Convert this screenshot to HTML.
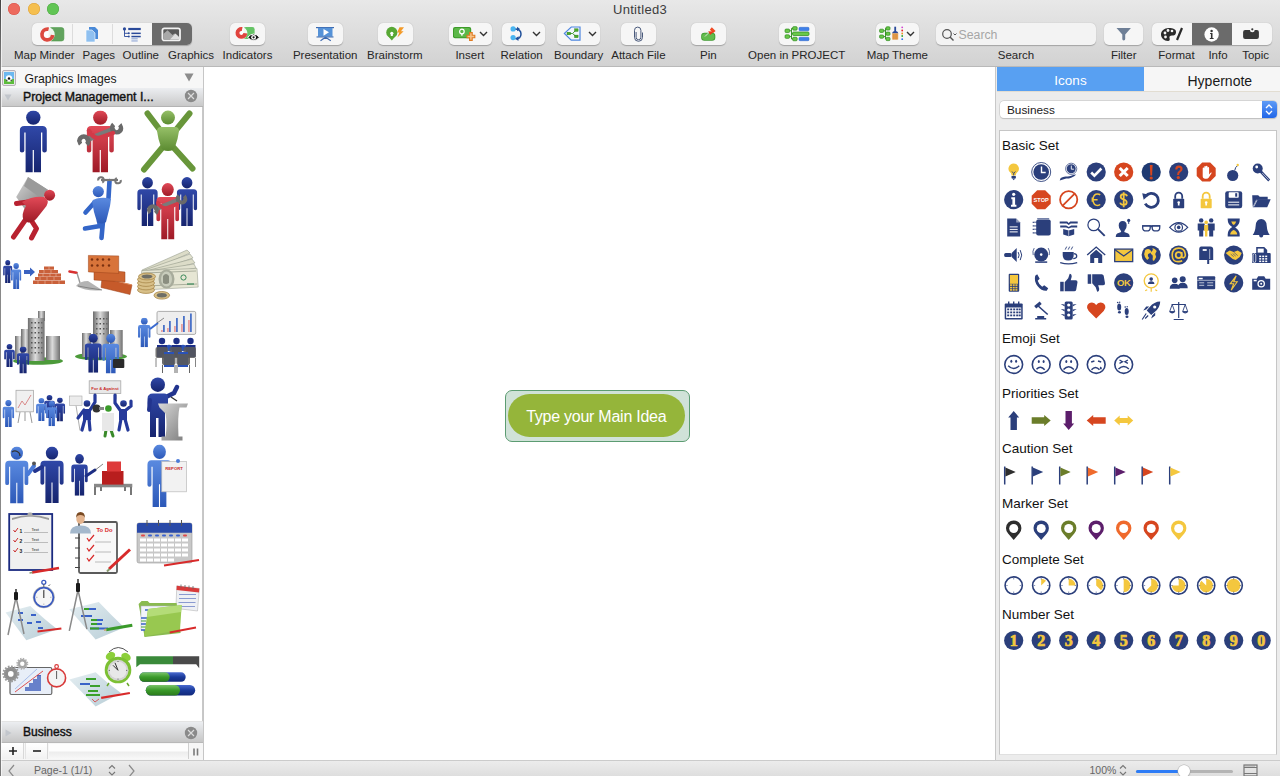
<!DOCTYPE html>
<html><head><meta charset="utf-8">
<style>
*{margin:0;padding:0;box-sizing:border-box}
html,body{width:1280px;height:776px;overflow:hidden;background:#fff;font-family:"Liberation Sans",sans-serif;position:relative}
.a{position:absolute}
#tb{left:0;top:0;width:1280px;height:67px;background:linear-gradient(#e8e8e8,#d2d2d2);border-bottom:1px solid #b9b9b9}
.tl{width:12px;height:12px;border-radius:50%;top:3px}
.title{left:0;width:1280px;top:2px;text-align:center;font-size:13px;letter-spacing:0.3px;color:#3c3c3c}
.btn{top:23px;height:22px;background:#f6f6f6;border-radius:5px;box-shadow:0 0.5px 1px rgba(0,0,0,.25)}
.lbl{top:49px;font-size:11.5px;color:#262626;text-align:center;white-space:nowrap}
.seg{top:23px;height:22px;}
#left{left:0;top:67px;width:203px;height:693px;background:#fff;border-right:1px solid #c8c8c8}
#canvas{left:204px;top:67px;width:791px;height:693px;background:#fff}
#right{left:995px;top:67px;width:285px;height:693px;background:#ececec;border-left:1px solid #c8c8c8}
#status{left:0;top:760px;width:1280px;height:16px;background:linear-gradient(#ececec,#dedede);border-top:1px solid #cbcbcb}
.hd{font-size:13.5px;color:#111;line-height:15px}
</style></head><body>
<div id="tb" class="a">
  <div class="a tl" style="left:8px;background:#ed6a5e;box-shadow:inset 0 0 0 0.5px #d9534a"></div>
  <div class="a tl" style="left:28px;background:#f5bf4f;box-shadow:inset 0 0 0 0.5px #dca03a"></div>
  <div class="a tl" style="left:47px;background:#61c554;box-shadow:inset 0 0 0 0.5px #4ea843"></div>
  <div class="a title">Untitled3</div>
  <!-- segmented 1 -->
  <div class="a btn" style="left:32px;width:160px"></div>
  <div class="a" style="left:72px;top:24px;width:1px;height:20px;background:#dcdcdc"></div>
  <div class="a" style="left:112px;top:24px;width:1px;height:20px;background:#dcdcdc"></div>
  <div class="a" style="left:152px;top:23px;width:40px;height:22px;background:#6b6b6b;border-radius:0 5px 5px 0"></div>
  <svg class="a" style="left:38px;top:25px" width="28" height="18" viewBox="0 0 28 18">
    <rect x="10.9" y="2.6" width="15" height="13.4" rx="2.5" fill="#62a35e" stroke="#4d9a48" stroke-width="0.6"/>
    <circle cx="9.3" cy="9.5" r="7.4" fill="#fff" fill-opacity="0.9"/>
    <circle cx="9.3" cy="9.5" r="5.35" fill="none" stroke="#dc4a40" stroke-width="3.7" stroke-dasharray="25.5 8" transform="rotate(5 9.3 9.5)"/>
  </svg>
  <svg class="a" style="left:84px;top:26px" width="16" height="17" viewBox="0 0 16 17">
    <path d="M5 1h6l3 3v9H5z" fill="#4a8ad8"/>
    <path d="M2 4h6l3 3v9H2z" fill="#8fc0f0" stroke="#fff" stroke-width="0.6"/>
  </svg>
  <svg class="a" style="left:122px;top:27px" width="22" height="16" viewBox="0 0 22 16">
    <circle cx="2.5" cy="1.9" r="1.6" fill="#2a4a9a"/>
    <path d="M2.5 1.9V9.5H6.8M2.5 6.3H6.8" stroke="#2a4a9a" stroke-width="0.9" fill="none"/>
    <rect x="6.25" y="0.9" width="12.5" height="2.2" fill="#2a4a9a"/>
    <rect x="9.4" y="5.6" width="9.35" height="1.5" fill="#2a4a9a"/>
    <rect x="9.4" y="8.8" width="9.35" height="1.5" fill="#2a4a9a"/>
    <circle cx="6.8" cy="6.3" r="1" fill="#2a4a9a"/><circle cx="6.8" cy="9.5" r="1" fill="#2a4a9a"/>
    <rect x="9.4" y="11.25" width="6.3" height="1.1" fill="#8fa6d6"/>
    <rect x="9.4" y="13.4" width="6.3" height="1.1" fill="#8fa6d6"/>
  </svg>
  <svg class="a" style="left:160px;top:27px" width="24" height="16" viewBox="0 0 24 16">
    <rect x="2.4" y="1.3" width="17.6" height="12.1" rx="2" fill="#5a5a5a" stroke="#f2f2f2" stroke-width="1.8"/>
    <path d="M3.3 12.5V7L7.5 3.2l5 4.8 2-1.6 4.6 4.6v1.5z" fill="#a8a8a8"/>
    <path d="M10 12.5L15.5 6.5l3.6 3.5v2.5z" fill="#e0e0e0"/>
  </svg>
  <!-- Indicators -->
  <div class="a btn" style="left:230px;width:35px"></div>
  <svg class="a" style="left:235px;top:26px" width="28" height="18" viewBox="0 0 28 18">
    <rect x="8.6" y="1" width="11" height="11.9" rx="2.2" fill="#66c466"/>
    <circle cx="6.4" cy="6.9" r="6" fill="#fff" fill-opacity="0.9"/>
    <circle cx="6.4" cy="6.9" r="3.95" fill="none" stroke="#e0443e" stroke-width="3.9" stroke-dasharray="18.6 6.2" transform="rotate(5 6.4 6.9)"/>
    <path d="M12.6 11.3q6-6.5 12 0q-6 6.5-12 0z" fill="#1a1a1a" stroke="#fff" stroke-width="1"/>
    <circle cx="18.6" cy="11.3" r="2.4" fill="#fff"/><circle cx="18.6" cy="11.3" r="1.1" fill="#1a1a1a"/>
  </svg>
  <!-- Presentation -->
  <div class="a btn" style="left:308px;width:35px"></div>
  <svg class="a" style="left:315px;top:26px" width="22" height="17" viewBox="0 0 22 17">
    <rect x="1" y="1" width="18" height="1.2" fill="#3d6ab0"/>
    <rect x="3" y="1.8" width="14.5" height="8.8" fill="#5592d8"/>
    <path d="M8.5 2.9v6.9l5.5-3.45z" fill="#fff"/>
    <rect x="1.5" y="10.4" width="17" height="1.1" fill="#3d6ab0"/>
    <path d="M10.5 11.2L5.5 14.8M10.5 11.2L15.8 14.8M7.5 12.5h6" stroke="#3d6ab0" stroke-width="1.1" fill="none"/>
  </svg>
  <!-- Brainstorm -->
  <div class="a btn" style="left:378px;width:35px"></div>
  <svg class="a" style="left:384px;top:26px" width="24" height="18" viewBox="0 0 24 18">
    <circle cx="7.8" cy="6.4" r="5.6" fill="#58a835"/>
    <path d="M4.8 11h6l-3 3.5z" fill="#58a835"/>
    <circle cx="7.8" cy="7.3" r="1.6" fill="#fff"/><path d="M7 8h1.6l.3 2H6.7z" fill="#fff"/>
    <path d="M15.5 1.2H20L17 5.3H19.6L13.4 11.5L15.3 6.6H13.1z" fill="#f39a28"/>
  </svg>
  <!-- Insert -->
  <div class="a btn" style="left:448.5px;width:43.5px"></div>
  <svg class="a" style="left:452px;top:26px" width="24" height="18" viewBox="0 0 24 18">
    <rect x="1" y="1" width="18.2" height="11.3" rx="2" fill="#3d9a2a"/>
    <rect x="2" y="2" width="16.2" height="9.3" rx="1.5" fill="#5cb848"/>
    <circle cx="9.9" cy="5.5" r="2.3" fill="none" stroke="#fff" stroke-width="1.2"/>
    <rect x="9.2" y="7.5" width="1.4" height="2.2" fill="#fff"/>
    <path d="M17.6 6.6h2.6v2.6h2.6v2.6h-2.6v2.6h-2.6v-2.6H15v-2.6h2.6z" fill="#f7c48a" stroke="#e07a20" stroke-width="1.1"/>
  </svg>
  <svg class="a" style="left:479px;top:31px" width="9" height="6" viewBox="0 0 9 6"><path d="M1 1l3.5 3.5L8 1" stroke="#333" stroke-width="1.4" fill="none"/></svg>
  <!-- Relation -->
  <div class="a btn" style="left:502px;width:42.5px"></div>
  <svg class="a" style="left:509px;top:26px" width="18" height="18" viewBox="0 0 18 18">
    <path d="M5.5 2.9q6.5 0 6.5 5t-5.5 4.8" stroke="#1f4f9a" stroke-width="1.5" fill="none"/>
    <path d="M8 0.8l3 2.3-3 2.1z" fill="#1f4f9a"/><path d="M9.6 10.2l-3.4 2.4 3.2 2.4z" fill="#1f4f9a"/>
    <circle cx="4.1" cy="2.9" r="2.6" fill="#48b4f0"/>
    <circle cx="4.1" cy="11.6" r="2.6" fill="#48b4f0"/>
  </svg>
  <svg class="a" style="left:532px;top:31px" width="9" height="6" viewBox="0 0 9 6"><path d="M1 1l3.5 3.5L8 1" stroke="#333" stroke-width="1.4" fill="none"/></svg>
  <!-- Boundary -->
  <div class="a btn" style="left:556.6px;width:43.7px"></div>
  <svg class="a" style="left:563px;top:26px" width="20" height="18" viewBox="0 0 20 18">
    <path d="M1.4 7.4L8.25 1H17V14.1H8.25z" fill="#f2f6fd" stroke="#4d86e0" stroke-width="1.2"/>
    <path d="M6 7.5h3.5M9.5 7.5l3.5-3.4M9.5 7.5l3.5 2.9" stroke="#3a9a2a" stroke-width="0.9"/>
    <rect x="4" y="6.2" width="3.6" height="2.6" fill="#4aaa2a" stroke="#2a7a1a" stroke-width="0.4"/>
    <rect x="11.5" y="2.8" width="3.6" height="2.6" fill="#4aaa2a" stroke="#2a7a1a" stroke-width="0.4"/>
    <rect x="11.5" y="9.1" width="3.6" height="2.6" fill="#4aaa2a" stroke="#2a7a1a" stroke-width="0.4"/>
  </svg>
  <svg class="a" style="left:588px;top:31px" width="9" height="6" viewBox="0 0 9 6"><path d="M1 1l3.5 3.5L8 1" stroke="#333" stroke-width="1.4" fill="none"/></svg>
  <!-- Attach File -->
  <div class="a btn" style="left:621px;width:35px"></div>
  <svg class="a" style="left:632px;top:26px" width="12" height="18" viewBox="0 0 12 18">
    <path d="M10.5 6.5V11.3A4 4 0 0 1 2.5 11.3V4.3A3.2 3.2 0 0 1 8.9 4.3V11.3A2.4 2.4 0 0 1 4.1 11.3V6" stroke="#4a5a7c" stroke-width="1" fill="none"/>
  </svg>
  <!-- Pin -->
  <div class="a btn" style="left:690.6px;width:35.7px"></div>
  <svg class="a" style="left:699px;top:26px" width="20" height="18" viewBox="0 0 20 18">
    <rect x="2.2" y="6.8" width="14.1" height="7.9" rx="3.2" fill="#3f9a30"/>
    <rect x="3" y="7.6" width="12.5" height="6.3" rx="2.6" fill="#62bc4c"/>
    <path d="M6 10.5l4.5-4.5" stroke="#e8e8e8" stroke-width="0.9"/>
    <path d="M10.8 3.8l2-2.5 3.8 3.6-2.5 2z" fill="#f04a24"/>
    <path d="M9.2 5.2l5.8 0.2-3.8 3.6z" fill="#e83a18"/>
  </svg>
  <!-- Open in PROJECT -->
  <div class="a btn" style="left:779px;width:36px"></div>
  <svg class="a" style="left:784px;top:26px" width="26" height="18" viewBox="0 0 26 18">
    <path d="M5.5 4.8H7.5M5.5 10.6H7.5M7.5 2.4V13M7.5 2.4H9M7.5 13H9M7.5 7.7H9" stroke="#2a8a1a" stroke-width="0.9" fill="none"/>
    <g fill="#6ac84a" stroke="#2a8a1a" stroke-width="0.7">
    <rect x="1.05" y="3.05" width="4.5" height="3.5" rx="1"/><rect x="1.05" y="8.85" width="4.5" height="3.5" rx="1"/>
    <rect x="8.65" y="0.65" width="4.5" height="3.5" rx="1"/><rect x="8.65" y="11.25" width="4.5" height="3.5" rx="1"/>
    <rect x="8.6" y="6" width="16.4" height="3.5" rx="1"/></g>
    <rect x="15" y="1.3" width="10" height="3.5" rx="1" fill="#3f80e8" stroke="#2a64c8" stroke-width="0.5"/>
    <rect x="15" y="11.2" width="10" height="3.5" rx="1" fill="#3f80e8" stroke="#2a64c8" stroke-width="0.5"/>
  </svg>
  <!-- Map Theme -->
  <div class="a btn" style="left:875.6px;width:43.4px"></div>
  <svg class="a" style="left:879px;top:26px" width="26" height="18" viewBox="0 0 26 18">
    <path d="M4.6 4.8H6.5M4.6 10.6H6.5M6.5 2.4V13M6.5 2.4H7M6.5 13H7M6.5 7.7H7" stroke="#2a8a1a" stroke-width="0.9" fill="none"/>
    <g fill="#6ac84a" stroke="#2a8a1a" stroke-width="0.7">
    <rect x="0.6" y="3.2" width="4" height="3.2" rx="0.9"/><rect x="0.6" y="9" width="4" height="3.2" rx="0.9"/>
    <rect x="7" y="0.8" width="4" height="3.2" rx="0.9"/><rect x="7" y="6.1" width="4" height="3.2" rx="0.9"/><rect x="7" y="11.4" width="4" height="3.2" rx="0.9"/></g>
    <rect x="15.3" y="0.7" width="1.8" height="5" fill="#2a4a9a"/>
    <path d="M13.2 7.5q0-2.5 3-2.5t3 2.5z" fill="#2a4a9a"/>
    <rect x="13.2" y="7.3" width="6" height="6.3" fill="#e8a050"/>
    <path d="M14.7 8v5.5M16.2 8v5.5M17.7 8v5.5" stroke="#c07a30" stroke-width="0.4"/>
    <circle cx="23.2" cy="1.3" r="0.9" fill="#d040d0"/><circle cx="23.2" cy="4.5" r="0.9" fill="#e82020"/>
    <circle cx="23.2" cy="7.5" r="0.9" fill="#f09020"/><circle cx="23.2" cy="10" r="0.9" fill="#30a030"/><circle cx="23.2" cy="13.2" r="0.9" fill="#3070f0"/>
  </svg>
  <svg class="a" style="left:906px;top:31px" width="9" height="6" viewBox="0 0 9 6"><path d="M1 1l3.5 3.5L8 1" stroke="#333" stroke-width="1.4" fill="none"/></svg>
  <!-- Search -->
  <div class="a btn" style="left:936px;width:160px;background:#f3f3f3"></div>
  <svg class="a" style="left:941px;top:28px" width="18" height="14" viewBox="0 0 18 14">
    <circle cx="6" cy="6" r="4.3" fill="none" stroke="#555" stroke-width="1.2"/>
    <path d="M9 9l3.5 3.5" stroke="#555" stroke-width="1.4"/>
    <path d="M12.5 5.5l1.5 1.5 1.5-1.5" stroke="#555" stroke-width="1" fill="none"/>
  </svg>
  <div class="a" style="left:958.5px;top:28px;font-size:12.3px;color:#a6a6a6">Search</div>
  <!-- Filter -->
  <div class="a btn" style="left:1104px;width:39px"></div>
  <svg class="a" style="left:1116px;top:27px" width="15" height="15" viewBox="0 0 15 15">
    <path d="M0.5 1H14.9L9.2 7.5V12Q9.2 13.4 7.7 13.4Q6.3 13.4 6.3 12V7.5Z" fill="#6e7f96"/>
  </svg>
  <!-- Format/Info/Topic -->
  <div class="a btn" style="left:1152px;width:120px"></div>
  <div class="a" style="left:1192px;top:23px;width:40px;height:22px;background:#6b6b6b"></div>
  <svg class="a" style="left:1160px;top:26px" width="26" height="17" viewBox="0 0 26 17">
    <path d="M9 2C4 2 1 5 1 8.5S4 15 8 15c2 0 2-1.5 1.5-3s0.5-2.5 2.5-2.5 4-.5 4-3.5S13 2 9 2z" fill="#2a2a2a"/>
    <circle cx="5" cy="7" r="1.4" fill="#f6f6f6"/><circle cx="8" cy="4.5" r="1.4" fill="#f6f6f6"/>
    <circle cx="12" cy="5" r="1.3" fill="#f6f6f6"/><circle cx="5.5" cy="11" r="1.4" fill="#f6f6f6"/>
    <path d="M17 14l5-12" stroke="#2a2a2a" stroke-width="2.2"/>
  </svg>
  <svg class="a" style="left:1203px;top:25px" width="18" height="18" viewBox="0 0 18 18">
    <circle cx="8.6" cy="9.5" r="7.2" fill="#fff"/>
    <circle cx="8.6" cy="6" r="1.2" fill="#333"/>
    <path d="M7.1 8h2.4v5h1.1v1H6.8v-1h1.1V9h-0.8z" fill="#333"/>
  </svg>
  <svg class="a" style="left:1242px;top:26px" width="20" height="17" viewBox="0 0 20 17">
    <rect x="1.1" y="3.9" width="15.8" height="9.1" rx="2" fill="#383838"/>
    <circle cx="10.3" cy="3.9" r="2.4" fill="#f6f6f6"/>
    <circle cx="10.3" cy="3.3" r="1.1" fill="#383838"/>
  </svg>
  <div class="a lbl" style="left:-15.7px;width:120px">Map Minder</div>
  <div class="a lbl" style="left:38.8px;width:120px">Pages</div>
  <div class="a lbl" style="left:80.8px;width:120px">Outline</div>
  <div class="a lbl" style="left:131.0px;width:120px">Graphics</div>
  <div class="a lbl" style="left:187.5px;width:120px">Indicators</div>
  <div class="a lbl" style="left:265.2px;width:120px">Presentation</div>
  <div class="a lbl" style="left:334.8px;width:120px">Brainstorm</div>
  <div class="a lbl" style="left:409.8px;width:120px">Insert</div>
  <div class="a lbl" style="left:461.6px;width:120px">Relation</div>
  <div class="a lbl" style="left:518.6px;width:120px">Boundary</div>
  <div class="a lbl" style="left:578.4px;width:120px">Attach File</div>
  <div class="a lbl" style="left:648.3px;width:120px">Pin</div>
  <div class="a lbl" style="left:736.7px;width:120px">Open in PROJECT</div>
  <div class="a lbl" style="left:837.3px;width:120px">Map Theme</div>
  <div class="a lbl" style="left:956.0px;width:120px">Search</div>
  <div class="a lbl" style="left:1063.7px;width:120px">Filter</div>
  <div class="a lbl" style="left:1116.5px;width:120px">Format</div>
  <div class="a lbl" style="left:1158.0px;width:120px">Info</div>
  <div class="a lbl" style="left:1195.6px;width:120px">Topic</div>
</div>
<div id="left" class="a">
  <div class="a" style="left:0;top:0;width:203px;height:21px;background:#f7f7f7"></div>
  <svg class="a" style="left:2px;top:3px" width="14" height="16" viewBox="0 0 14 16">
    <rect x="0.5" y="0.5" width="13" height="15" rx="1.5" fill="#e8e8e8" stroke="#b8b0b8"/>
    <rect x="2" y="2" width="10" height="12" fill="#6cb8f0"/>
    <rect x="2" y="9" width="10" height="5" fill="#5cbc3c"/>
    <circle cx="7" cy="8.5" r="3.2" fill="#fff"/>
    <circle cx="7" cy="8.5" r="1.2" fill="#111"/>
    <circle cx="4.8" cy="10.2" r="0.8" fill="#333"/><circle cx="9.2" cy="10.2" r="0.8" fill="#333"/>
  </svg>
  <div class="a" style="left:24.5px;top:5px;font-size:12.2px;color:#1a1a1a">Graphics Images</div>
  <svg class="a" style="left:184px;top:6px" width="10" height="9" viewBox="0 0 10 9"><path d="M0.5 0.5h9L5 8.5z" fill="#8c8c8c"/></svg>
  <div class="a" style="left:0;top:21px;width:203px;height:19px;background:linear-gradient(#eceef1,#c9c9c9);border-bottom:1px solid #b3b3b3"></div>
  <svg class="a" style="left:4px;top:27px" width="8" height="7" viewBox="0 0 8 7"><path d="M0.5 0.5h7L4 6.5z" fill="#c2c6cc"/></svg>
  <div class="a" style="left:23px;top:23px;font-size:12.3px;-webkit-text-stroke:0.4px #111;color:#111">Project Management I...</div>
  <svg class="a" style="left:184px;top:22px" width="14" height="14" viewBox="0 0 14 14"><circle cx="7" cy="7" r="6.2" fill="#8a8a8a"/><path d="M4 4l6 6M10 4l-6 6" stroke="#dcdcdc" stroke-width="1.2"/></svg>
  <!-- Business header -->
  <div class="a" style="left:0;top:654px;width:203px;height:22px;background:linear-gradient(#eceef1,#c6c6c6);border-top:1px solid #e4e4e4;border-bottom:1px solid #b8b8b8"></div>
  <svg class="a" style="left:5px;top:662px" width="7" height="8" viewBox="0 0 7 8"><path d="M0.5 0.5v7L6.5 4z" fill="#c2c6cc"/></svg>
  <div class="a" style="left:23px;top:658px;font-size:12px;-webkit-text-stroke:0.4px #111;color:#111">Business</div>
  <svg class="a" style="left:184px;top:659px" width="14" height="14" viewBox="0 0 14 14"><circle cx="7" cy="7" r="6.2" fill="#8a8a8a"/><path d="M4 4l6 6M10 4l-6 6" stroke="#dcdcdc" stroke-width="1.2"/></svg>
  <!-- +/- bar -->
  <div class="a" style="left:0;top:676px;width:203px;height:17px;background:#f6f6f6"></div>
  <div class="a" style="left:0;top:676px;width:24px;height:16px;background:linear-gradient(#fff,#f2f2f2);border-right:1px solid #d8d8d8"></div>
  <div class="a" style="left:25px;top:676px;width:23px;height:16px;background:linear-gradient(#fff,#f2f2f2);border-right:1px solid #d8d8d8;border-left:1px solid #e4e4e4"></div>
  <div class="a" style="left:49px;top:677px;width:139px;height:15px;background:linear-gradient(#fdfdfd 0%,#fdfdfd 45%,#ededed 55%,#f8f8f8 100%)"></div>
  <div class="a" style="left:188px;top:676px;width:15px;height:16px;background:#f6f6f6;border-left:1px solid #cfcfcf"></div>
  <svg class="a" style="left:8px;top:679px" width="10" height="10" viewBox="0 0 10 10"><path d="M5 1v8M1 5h8" stroke="#222" stroke-width="1.6"/></svg>
  <svg class="a" style="left:32px;top:679px" width="10" height="10" viewBox="0 0 10 10"><path d="M1 5h8" stroke="#222" stroke-width="1.6"/></svg>
  <svg class="a" style="left:192px;top:680px" width="8" height="10" viewBox="0 0 8 10"><path d="M2 1.5v7M5.5 1.5v7" stroke="#7a7a7a" stroke-width="1.6"/></svg>
  <svg class="a" style="left:0;top:40px" width="203" height="615" viewBox="0 107 203 615">
<defs>
  <linearGradient id="gNavy" x1="0" y1="0" x2="0" y2="1"><stop offset="0" stop-color="#3048a8"/><stop offset="1" stop-color="#16246e"/></linearGradient>
  <linearGradient id="gBlue" x1="0" y1="0" x2="0" y2="1"><stop offset="0" stop-color="#5a8ae0"/><stop offset="1" stop-color="#2c58b8"/></linearGradient>
  <linearGradient id="gRed" x1="0" y1="0" x2="0" y2="1"><stop offset="0" stop-color="#e24a58"/><stop offset="1" stop-color="#9e1a26"/></linearGradient>
  <linearGradient id="gGreen" x1="0" y1="0" x2="0" y2="1"><stop offset="0" stop-color="#96c068"/><stop offset="1" stop-color="#5a8a30"/></linearGradient>
  <linearGradient id="gBld" x1="0" y1="0" x2="1" y2="0"><stop offset="0" stop-color="#6c6c6c"/><stop offset="0.45" stop-color="#dcdcdc"/><stop offset="1" stop-color="#707070"/></linearGradient>
  <linearGradient id="gGrey" x1="0" y1="0" x2="1" y2="1"><stop offset="0" stop-color="#d8d8d8"/><stop offset="1" stop-color="#7a7a7a"/></linearGradient>
  <linearGradient id="gPaper" x1="0" y1="0" x2="1" y2="1"><stop offset="0" stop-color="#e4eef2"/><stop offset="1" stop-color="#b8cdd6"/></linearGradient>
  <linearGradient id="gBar" x1="0" y1="0" x2="0" y2="1"><stop offset="0" stop-color="#7cc46a"/><stop offset="0.5" stop-color="#3a9a2a"/><stop offset="1" stop-color="#2a7a1a"/></linearGradient>
  <linearGradient id="gBarB" x1="0" y1="0" x2="0" y2="1"><stop offset="0" stop-color="#4a6ad0"/><stop offset="0.5" stop-color="#1a3a9a"/><stop offset="1" stop-color="#12287a"/></linearGradient>
  <symbol id="man" viewBox="0 0 28 62" preserveAspectRatio="none"><circle cx="14" cy="7.2" r="7.2"/><path d="M0.5 20Q0.5 15.5 5 15.5H23Q27.5 15.5 27.5 20V40Q27.5 42 25.2 42Q23 42 23 40V22H21.7V62H14.6V39.5H13.4V62H6.3V22H5V40Q5 42 2.7 42Q0.5 42 0.5 40Z"/></symbol>
  <symbol id="wr" viewBox="0 0 46 16"><path d="M8 8H38" stroke="#7a7a7a" stroke-width="5"/><circle cx="6" cy="8" r="4.3" fill="none" stroke="#6a6a6a" stroke-width="4.4" stroke-dasharray="20 7" transform="rotate(158 6 8)"/><circle cx="40" cy="8" r="4.3" fill="none" stroke="#6a6a6a" stroke-width="4.4" stroke-dasharray="20 7" transform="rotate(-22 40 8)"/></symbol>
</defs>
<!-- r0c0 blue man -->
<use href="#man" x="19.3" y="110.4" width="28" height="62" fill="url(#gNavy)"/>
<!-- r0c1 red man with wrench -->
<use href="#man" x="86.3" y="110.4" width="28" height="62" fill="url(#gRed)"/>
<g transform="rotate(-22 100 134)"><use href="#wr" x="76" y="126" width="48" height="17"/></g>
<path d="M89 131q5 8 10 7l14-5" stroke="#d23a48" stroke-width="4.5" fill="none" stroke-linecap="round"/>
<!-- r0c2 green X man -->
<circle cx="168" cy="117.6" r="7" fill="url(#gGreen)"/>
<path d="M147.5 113.5L160 130M189.5 113.5L176 130M162 148L144 169.5M174 148L192.5 168.5" stroke="#68963a" stroke-width="6" stroke-linecap="round"/>
<path d="M157 131q0-4 4-4h14q4 0 4 4q-1 8-4 16q-1 4-7 4t-7-4q-3-8-4-16z" fill="url(#gGreen)"/>
<!-- r1c0 red man carrying box -->
<path d="M16.2 197L28 177L47.8 189.8L36 209.6L25 209.6Z" fill="url(#gGrey)"/><path d="M28 177L47.8 189.8L42 199L24 186z" fill="#9a9a9a"/>
<circle cx="49.6" cy="195.2" r="5.5" fill="url(#gRed)"/>
<path d="M40 200.5L16.5 203.5M26 219L13.5 237M31 220l5.5 8.5-5 9.5" stroke="#b82230" stroke-width="5" stroke-linecap="round" stroke-linejoin="round" fill="none"/>
<path d="M22 202Q32 196 44 197Q50 200 46.5 206L37 218Q33 223 28 222.5L23.5 220Q21 214 26 206z" fill="url(#gRed)"/>
<!-- r1c1 blue man reaching -->
<circle cx="98.3" cy="191.6" r="5.6" fill="url(#gBlue)"/>
<path d="M109.5 181l-1 17M94 203l-8.5 9.5M99 221l1 5-15 2.5M103 221l-1.5 17" stroke="#3466c8" stroke-width="4.6" stroke-linecap="round" stroke-linejoin="round" fill="none"/>
<path d="M92 201q5-4 15-3l4 1-1 7-4 16q-4 3-9 0l-3-10z" fill="url(#gBlue)"/>
<path d="M101 180h17" stroke="#777" stroke-width="2.2"/><circle cx="101" cy="180" r="2.8" fill="none" stroke="#777" stroke-width="2" stroke-dasharray="12 5.6" transform="rotate(170 101 180)"/><circle cx="118" cy="180.5" r="2.8" fill="none" stroke="#777" stroke-width="2" stroke-dasharray="12 5.6" transform="rotate(-10 118 180.5)"/>
<!-- r1c2 team -->
<use href="#man" x="137" y="177" width="21" height="49" fill="url(#gNavy)"/>
<use href="#man" x="176.5" y="177" width="21" height="49" fill="url(#gNavy)"/>
<use href="#man" x="156" y="183" width="23.5" height="56.4" fill="url(#gRed)"/>
<g transform="rotate(-22 167 204)"><use href="#wr" x="146" y="197" width="42" height="15"/></g>
<path d="M158 203q4 6 9 5l10-4" stroke="#d23a48" stroke-width="4" fill="none" stroke-linecap="round"/>
<!-- r2c0 men arrow bricks -->
<use href="#man" x="3" y="260" width="9.5" height="23" fill="url(#gNavy)"/>
<use href="#man" x="10.8" y="263" width="10.7" height="26" fill="url(#gBlue)"/>
<path d="M24 270h6v-2.5l5 4.5-5 4.5v-2.5h-6z" fill="#3a62c0"/>
<g fill="#c9603a">
<rect x="44" y="266.5" width="10" height="3.2"/><rect x="39" y="270" width="19" height="3.2"/><rect x="38" y="273.5" width="23" height="3.2"/><rect x="35" y="277" width="26" height="3.2"/><rect x="33" y="280.5" width="32" height="3.5"/>
</g><g stroke="#f0c8b0" stroke-width="0.5"><path d="M49 266.5v3.2M44 270v3.2M51 270v3.2M43 273.5v3.2M50 273.5v3.2M56 273.5v3.2M40 277v3.2M47 277v3.2M54 277v3.2M38 280.5v3.5M45 280.5v3.5M52 280.5v3.5M59 280.5v3.5"/></g>
<!-- r2c1 bricks trowel -->
<path d="M102 278l30 7-2 9.5-29-7z" fill="#c65a2a" stroke="#9a4018" stroke-width="0.5"/><path d="M104 278l28 7" stroke="#e08a5a" stroke-width="1.2"/>
<path d="M94 269l31 3v10l-31-2z" fill="#cc6430" stroke="#9a4018" stroke-width="0.5"/>
<path d="M88.4 255.4l30.3 0.5v17.5l-30.3-1.5z" fill="#d8743a" stroke="#9a4018" stroke-width="0.5"/>
<g fill="#7a3010"><circle cx="92" cy="259.5" r="1.2"/><circle cx="97.5" cy="259.5" r="1.2"/><circle cx="103" cy="259.5" r="1.2"/><circle cx="109" cy="259.5" r="1.2"/><circle cx="92" cy="265.5" r="1.2"/><circle cx="97.5" cy="265.5" r="1.2"/><circle cx="103" cy="265.5" r="1.2"/><circle cx="109" cy="265.5" r="1.2"/></g>
<path d="M69.5 271.5l7 1.2" stroke="#d83030" stroke-width="2.6" stroke-linecap="round"/><path d="M77 273l3 10" stroke="#999" stroke-width="1.4" fill="none"/><path d="M76 286q4-5 12-5l14 9q-14 2-26-4z" fill="#b4b4b4"/><path d="M78 286q10 2 24 4" stroke="#777" stroke-width="0.8" fill="none"/>
<!-- r2c2 money -->
<g stroke="#8a9080" stroke-width="0.5">
<path d="M142 270L187 250L190 253L145 273z" fill="#dcdcc8"/>
<path d="M142 271L190 254L193 258L144 275z" fill="#e2e2d0"/>
<path d="M142 272L192 259L195 263L144 277z" fill="#dcdcc8"/>
<path d="M142 272L194 264L196 268L144 278z" fill="#e2e2d0"/>
<path d="M141.7 270.5L197 268.5L198.2 287.1L143 290z" fill="#e6e6d4"/>
</g>
<path d="M143 273l53-2M144 286l53-2" stroke="#9aa08e" stroke-width="0.8"/>
<ellipse cx="166.5" cy="279" rx="8" ry="9.5" fill="#a8ac9c"/><ellipse cx="166.5" cy="279" rx="5.5" ry="7.5" fill="#c8ccbc"/><path d="M163 276q3-4 6 0v7q-3 2-6 0z" fill="#8a8e80"/>
<circle cx="183.5" cy="277.5" r="2.6" fill="none" stroke="#3a8a5a" stroke-width="1"/>
<path d="M187 284h7" stroke="#3a8a5a" stroke-width="1.2"/>
<g fill="#d8c088" stroke="#a8884a" stroke-width="0.8"><ellipse cx="146" cy="290" rx="8.5" ry="3.4"/><ellipse cx="146" cy="286.5" rx="8.5" ry="3.4"/><ellipse cx="146" cy="283" rx="8.5" ry="3.4"/><ellipse cx="146" cy="279.5" rx="8.5" ry="3.4"/><ellipse cx="147" cy="276.5" rx="8.5" ry="3.4"/><ellipse cx="161.8" cy="295.3" rx="7.8" ry="3.8"/></g>
<g fill="#6e6e66"><ellipse cx="147" cy="276.5" rx="5.5" ry="2"/><ellipse cx="161.8" cy="295.3" rx="5" ry="2.2"/></g>
<!-- r3c0 buildings + men -->
<ellipse cx="38" cy="361" rx="25" ry="3.8" fill="#4c9a3a"/>
<rect x="15" y="336" width="10" height="24" fill="url(#gBld)"/>
<rect x="21" y="329" width="10" height="31" fill="url(#gBld)"/>
<rect x="38" y="311" width="7" height="10" fill="url(#gBld)"/>
<rect x="27.9" y="318" width="16.7" height="43" fill="url(#gBld)"/>
<rect x="46" y="336" width="14" height="24" fill="url(#gBld)"/>
<g fill="#666"><rect x="31" y="352" width="1.5" height="1.5"/><rect x="34.5" y="352" width="1.5" height="1.5"/><rect x="38" y="352" width="1.5" height="1.5"/><rect x="41" y="322" width="1.5" height="1.5"/><rect x="41" y="327" width="1.5" height="1.5"/><rect x="41" y="332" width="1.5" height="1.5"/><rect x="41" y="337" width="1.5" height="1.5"/><rect x="41" y="342" width="1.5" height="1.5"/><rect x="41" y="347" width="1.5" height="1.5"/><rect x="41" y="352" width="1.5" height="1.5"/></g><g fill="#555"><rect x="31" y="322" width="1.5" height="1.5"/><rect x="34.5" y="322" width="1.5" height="1.5"/><rect x="38" y="322" width="1.5" height="1.5"/><rect x="31" y="327" width="1.5" height="1.5"/><rect x="34.5" y="327" width="1.5" height="1.5"/><rect x="38" y="327" width="1.5" height="1.5"/><rect x="31" y="332" width="1.5" height="1.5"/><rect x="34.5" y="332" width="1.5" height="1.5"/><rect x="38" y="332" width="1.5" height="1.5"/><rect x="31" y="337" width="1.5" height="1.5"/><rect x="34.5" y="337" width="1.5" height="1.5"/><rect x="38" y="337" width="1.5" height="1.5"/><rect x="31" y="342" width="1.5" height="1.5"/><rect x="34.5" y="342" width="1.5" height="1.5"/><rect x="38" y="342" width="1.5" height="1.5"/><rect x="31" y="347" width="1.5" height="1.5"/><rect x="34.5" y="347" width="1.5" height="1.5"/><rect x="38" y="347" width="1.5" height="1.5"/></g>
<use href="#man" x="4" y="344" width="11" height="23" fill="url(#gNavy)"/>
<use href="#man" x="16.7" y="346.4" width="12.8" height="27" fill="url(#gNavy)"/>
<!-- r3c1 handshake -->
<ellipse cx="101" cy="356.5" rx="26" ry="3.8" fill="#4c9a3a"/>
<rect x="82" y="333" width="9" height="24" fill="url(#gBld)"/>
<rect x="110" y="330" width="12.7" height="27" fill="url(#gBld)"/>
<rect x="93" y="311.4" width="16" height="46" fill="url(#gBld)"/>
<g fill="#666"><rect x="96" y="333" width="1.5" height="1.5"/><rect x="99.5" y="333" width="1.5" height="1.5"/><rect x="103" y="333" width="1.5" height="1.5"/><rect x="106" y="318" width="1.5" height="1.5"/><rect x="106" y="323" width="1.5" height="1.5"/><rect x="106" y="328" width="1.5" height="1.5"/></g><g fill="#555"><rect x="96" y="318" width="1.5" height="1.5"/><rect x="99.5" y="318" width="1.5" height="1.5"/><rect x="103" y="318" width="1.5" height="1.5"/><rect x="96" y="323" width="1.5" height="1.5"/><rect x="99.5" y="323" width="1.5" height="1.5"/><rect x="103" y="323" width="1.5" height="1.5"/><rect x="96" y="328" width="1.5" height="1.5"/><rect x="99.5" y="328" width="1.5" height="1.5"/><rect x="103" y="328" width="1.5" height="1.5"/></g>
<use href="#man" x="84.5" y="333.7" width="17.5" height="39" fill="url(#gNavy)"/>
<use href="#man" x="102" y="333.7" width="17.5" height="39.8" fill="url(#gBlue)"/>
<rect x="113" y="359" width="11.3" height="9" rx="1" fill="#2a2a2a"/>
<!-- r3c2 presentation audience -->
<rect x="157" y="311.4" width="38.7" height="23" rx="1.5" fill="#eeeeee" stroke="#999" stroke-width="0.8"/>
<g fill="#4a72c8"><rect x="163" y="325" width="1.8" height="7"/><rect x="169" y="321" width="1.8" height="11"/><rect x="176" y="318" width="1.8" height="14"/><rect x="183" y="316" width="1.8" height="16"/><rect x="190" y="313.5" width="1.8" height="18.5"/></g>
<g fill="#e8a0a0"><rect x="161" y="330" width="1.8" height="2"/><rect x="167" y="328" width="1.8" height="4"/><rect x="174" y="326" width="1.8" height="6"/><rect x="181" y="324" width="1.8" height="8"/><rect x="188" y="320" width="1.8" height="12"/></g>
<use href="#man" x="137.8" y="317.7" width="13" height="29.5" fill="url(#gBlue)"/>
<path d="M150 329l8-6" stroke="#3a6ad0" stroke-width="2" /><path d="M157 323l7-5" stroke="#444" stroke-width="0.6"/>
<g fill="#1c2e86"><circle cx="162" cy="341" r="3.2"/><circle cx="176.5" cy="341" r="3.2"/><circle cx="190.5" cy="341" r="3.2"/></g>
<g fill="#2a52b8"><circle cx="169" cy="348" r="3.2"/><circle cx="183" cy="348" r="3.2"/></g>
<g fill="#1c2e86"><path d="M157 345h10v12h-10zM171.5 345h10v12h-10zM185.5 345h10v12h-10z"/></g>
<g fill="#5a5a5a" fill-opacity="0.85"><rect x="155.5" y="347" width="12.5" height="11" rx="2"/><rect x="169.5" y="347" width="12.5" height="11" rx="2"/><rect x="183.5" y="347" width="12.5" height="11" rx="2"/></g>
<g stroke="#666" stroke-width="0.8"><path d="M156 358v9M167.5 358v9M184 358v9M195.5 358v9"/></g>
<g fill="#2a52b8"><path d="M164 352h10v15h-10zM178 352h10v15h-10z"/></g>
<g fill="#5a5a5a" fill-opacity="0.9"><rect x="162" y="354" width="13.5" height="11" rx="2"/><rect x="176.5" y="354" width="13.5" height="11" rx="2"/></g>
<g stroke="#555" stroke-width="0.9"><path d="M162.5 365v8M175 365v8M177 365v8M189.5 365v8"/></g>
<!-- r4c0 flipchart group -->
<rect x="16" y="390.3" width="17.5" height="21.5" fill="#f0f0f0" stroke="#aaa" stroke-width="0.8"/>
<path d="M18 408l4-7 3 4 6-10" stroke="#d06060" stroke-width="0.7" fill="none"/>
<path d="M20 412l-2 11M25 412v9M30 412l2 11" stroke="#999" stroke-width="1"/>
<use href="#man" x="2.4" y="399.9" width="12" height="27" fill="url(#gBlue)"/>
<use href="#man" x="44" y="395" width="11" height="23" fill="url(#gNavy)"/>
<use href="#man" x="54.5" y="397.5" width="10.8" height="24" fill="url(#gNavy)"/>
<use href="#man" x="35.9" y="398" width="11" height="23" fill="url(#gBlue)"/>
<use href="#man" x="46" y="401" width="11.5" height="25.2" fill="url(#gBlue)"/>
<!-- r4c1 protest -->
<rect x="89.2" y="380.8" width="31.6" height="12.7" fill="#e8e8e8" stroke="#aaa" stroke-width="0.8"/>
<text x="105" y="389.5" font-size="4.2" font-weight="bold" fill="#c82828" text-anchor="middle" font-family="Liberation Sans">For &amp; Against</text>
<path d="M95 393.5v6M116 393.5v6M76 405.5l4 25" stroke="#999" stroke-width="0.8"/>
<rect x="69.3" y="396" width="12.7" height="9.5" fill="#ececec" stroke="#aaa" stroke-width="0.6"/>
<circle cx="87" cy="403.5" r="3.3" fill="url(#gNavy)"/><circle cx="123.5" cy="403.5" r="3.3" fill="url(#gNavy)"/>
<path d="M83 409h8v11h-8zM119 409h8v11h-8z" fill="#263a9a"/><path d="M85 419l-3 11M89 419l1 11M84 410l-6 8M90 410l5-8v-7M121 419l-2 11M125 419l3 11M120 410l-5-7v-8M126 410l5-4v-5" stroke="#263a9a" stroke-width="3.2" stroke-linecap="round" fill="none"/>
<circle cx="108.4" cy="408.5" r="3.3" fill="#3a9a2a"/>
<path d="M106 430l-1 6M111 430l2 6" stroke="#3a8a2a" stroke-width="3" stroke-linecap="round"/>
<rect x="102" y="413" width="12" height="18" fill="#e8e8e8"/>
<circle cx="96.5" cy="408.5" r="4" fill="#333"/><path d="M99 407h5v3h-5z" fill="#888"/>
<!-- r4c2 podium -->
<circle cx="157.8" cy="384.7" r="7.2" fill="url(#gNavy)"/>
<path d="M166 397L174 393L177 387" stroke="#22348e" stroke-width="4.5" stroke-linecap="round" fill="none"/>
<path d="M147.5 399Q147.5 393.5 153 393.5H164Q168 393.5 168 397V412H165V437H158.5V418H156V437H150V412Q147.5 408 147.5 403z" fill="url(#gNavy)"/>
<path d="M150 400l-1 10" stroke="#22348e" stroke-width="4" stroke-linecap="round"/>
<path d="M158 403.5h30l-1.5 4h-7q-2 8-1 29h4v4h-21v-4h4q2-12 0-23l-6-6z" fill="url(#gGrey)"/>
<path d="M171 397l6 4" stroke="#333" stroke-width="1.4"/>
<!-- r5c0 interview -->
<use href="#man" x="4.8" y="446.5" width="24" height="57" fill="url(#gBlue)"/>
<path d="M28 474l6-8" stroke="#4a7ad8" stroke-width="4" stroke-linecap="round"/><circle cx="34" cy="463.5" r="2" fill="#555"/>
<path d="M12 452a5 5 0 0 1 8 4" stroke="#333" stroke-width="1.2" fill="none"/>
<use href="#man" x="40" y="446.5" width="24" height="56.5" fill="url(#gNavy)"/>
<path d="M42 467l-7 4" stroke="#23358e" stroke-width="4" stroke-linecap="round"/>
<!-- r5c1 man box table -->
<use href="#man" x="71" y="454" width="17" height="41.8" fill="url(#gNavy)"/>
<path d="M86 476l9-6" stroke="#1c2e86" stroke-width="3" stroke-linecap="round"/><path d="M94 471l9-7" stroke="#333" stroke-width="0.6"/>
<rect x="94" y="483.8" width="38.3" height="3.5" fill="#888"/>
<path d="M95 487v8M131 487v8M101 487v4M125 487v4" stroke="#777" stroke-width="2"/>
<rect x="102" y="471" width="21.5" height="13.6" fill="#b81e1e"/>
<rect x="107" y="461.5" width="14" height="10" fill="#de3a3a"/>
<!-- r5c2 report -->
<use href="#man" x="147" y="444.5" width="25" height="62.5" fill="url(#gBlue)"/>
<rect x="161.8" y="461.5" width="24.7" height="30.3" fill="#f2f2f2" stroke="#bbb" stroke-width="0.7"/>
<text x="174" y="469.5" font-size="4.2" font-weight="bold" fill="#c82828" text-anchor="middle" font-family="Liberation Sans">REPORT</text>
<circle cx="178" cy="461" r="2" fill="#4a7ad8"/>
<!-- r6c0 clipboard -->
<rect x="9.2" y="514" width="43" height="56" fill="#f0f0f0" stroke="#1a2a80" stroke-width="1.8"/>
<path d="M12 520q18-7 37 0v-2q-18-6-37 0z" fill="#9a9a9a"/><rect x="27.5" y="512.5" width="5" height="4" rx="1.5" fill="#aaa"/>
<g stroke="#c82828" stroke-width="1" fill="none"><path d="M13.5 530l1.5 2 3-4M13.5 540l1.5 2 3-4M13.5 550l1.5 2 3-4"/></g>
<g font-family="Liberation Sans" font-size="5" font-weight="bold" fill="#222"><text x="19.5" y="533">1</text><text x="19.5" y="543">2</text><text x="19.5" y="553">3</text></g>
<g font-family="Liberation Sans" font-size="4" fill="#222"><text x="31.5" y="531">Text</text><text x="31.5" y="541">Text</text><text x="31.5" y="551">Text</text></g>
<g stroke="#999" stroke-width="0.6"><path d="M24 532.5h24M24 542.5h24M24 552.5h24"/></g>
<path d="M32 572.5l27-4.5" stroke="#d82a2a" stroke-width="2.6"/><path d="M29.5 573l3-.5" stroke="#8a9a70" stroke-width="1.5"/>
<!-- r6c1 todo -->
<rect x="79" y="522" width="38" height="51" rx="1.5" fill="#f8f8f8" stroke="#5a5a5a" stroke-width="1.8"/>
<g stroke="#444" stroke-width="1.2"><path d="M75 538h5M75 548h5M75 558h5M75 567.5h5"/></g>
<path d="M70 533.5q0-8 10.5-8t10.5 8z" fill="#a4b8cc"/><ellipse cx="80.5" cy="519" rx="4.2" ry="5" fill="#e4b48e"/><path d="M76 518q0-6 4.5-6t4.5 6q-1-3-4.5-3t-4.5 3z" fill="#7a4a22"/>
<text x="104.5" y="532" font-size="5.8" font-weight="bold" fill="#d82a2a" text-anchor="middle" font-family="Liberation Sans">To Do</text>
<g stroke="#d82a2a" stroke-width="1.2" fill="none"><path d="M87 538l2 3 5-6M87 548l2 3 5-6M87 558l2 3 5-6"/></g>
<g stroke="#aaa" stroke-width="0.8"><path d="M95 542h16M95 552h16M95 562h16"/></g>
<path d="M109 569l21-19.5" stroke="#d82a2a" stroke-width="3"/><path d="M107 571.5l2.5-2.5" stroke="#8a9a70" stroke-width="2"/>
<!-- r6c2 calendar -->
<rect x="137" y="523" width="55" height="40" rx="2" fill="#c8c8c8" stroke="#999" stroke-width="0.6"/>
<path d="M137 532.7V525q0-2 2-2h51q2 0 2 2v7.7z" fill="#2a4aa8"/>
<g stroke="#555" stroke-width="1"><path d="M147 520v6M158.5 520v6M170 520v6M181.5 520v6"/></g>
<g fill="#3a62d0"><rect x="148" y="534.5" width="4" height="2" rx="1"/><rect x="155" y="534.5" width="4" height="2" rx="1"/><rect x="162" y="534.5" width="4" height="2" rx="1"/><rect x="169" y="534.5" width="4" height="2" rx="1"/><rect x="176" y="534.5" width="4" height="2" rx="1"/></g>
<g fill="#e04a4a"><rect x="141" y="534.5" width="4" height="2" rx="1"/><rect x="183" y="534.5" width="4" height="2" rx="1"/></g>
<g fill="#fff"><rect x="140" y="538.5" width="6" height="3"/><rect x="147" y="538.5" width="6" height="3"/><rect x="154" y="538.5" width="6" height="3"/><rect x="161" y="538.5" width="6" height="3"/><rect x="168" y="538.5" width="6" height="3"/><rect x="175" y="538.5" width="6" height="3"/><rect x="182" y="538.5" width="6" height="3"/>
<rect x="140" y="543.5" width="6" height="3"/><rect x="147" y="543.5" width="6" height="3"/><rect x="154" y="543.5" width="6" height="3"/><rect x="161" y="543.5" width="6" height="3"/><rect x="168" y="543.5" width="6" height="3"/><rect x="175" y="543.5" width="6" height="3"/><rect x="182" y="543.5" width="6" height="3"/>
<rect x="140" y="548.5" width="6" height="3"/><rect x="147" y="548.5" width="6" height="3"/><rect x="154" y="548.5" width="6" height="3"/><rect x="161" y="548.5" width="6" height="3"/><rect x="168" y="548.5" width="6" height="3"/><rect x="175" y="548.5" width="6" height="3"/><rect x="182" y="548.5" width="6" height="3"/>
<rect x="140" y="553.5" width="6" height="3"/><rect x="147" y="553.5" width="6" height="3"/><rect x="154" y="553.5" width="6" height="3"/><rect x="161" y="553.5" width="6" height="3"/><rect x="168" y="553.5" width="6" height="3"/><rect x="175" y="553.5" width="6" height="3"/><rect x="182" y="553.5" width="6" height="3"/>
<rect x="140" y="558.5" width="6" height="3"/><rect x="147" y="558.5" width="6" height="3"/><rect x="154" y="558.5" width="6" height="3"/><rect x="161" y="558.5" width="6" height="3"/><rect x="168" y="558.5" width="6" height="3"/></g>
<path d="M164 565.5l35-5.5" stroke="#d82a2a" stroke-width="2.2"/>
<!-- r7c0 compass paper stopwatch -->
<path d="M5.6 612.5L30.3 606Q45 620 57.4 629.2L26.3 640.3Q15 625 5.6 612.5z" fill="url(#gPaper)"/>
<g fill="#3a62c8"><rect x="18" y="612" width="5" height="2"/><rect x="31" y="614" width="5" height="2"/><rect x="18" y="619" width="5" height="2"/><rect x="36" y="621" width="5" height="2"/><rect x="27" y="622" width="5" height="2"/><rect x="38" y="627" width="5" height="2"/></g>
<path d="M16 597L8 635M16 597L24 634" stroke="#8a8a8a" stroke-width="1.5"/><path d="M16 589v4" stroke="#222" stroke-width="1.4"/><rect x="14" y="592" width="4" height="8" rx="1" fill="#1a1a1a"/>
<circle cx="43.8" cy="597.3" r="11" fill="#b8b8b8"/><circle cx="43.8" cy="597.3" r="9.6" fill="#f6f6f6" stroke="#3a5ac0" stroke-width="1.8"/><circle cx="43.8" cy="582.3" r="2" fill="none" stroke="#3a5ac0" stroke-width="1.3"/><path d="M43.8 584.3v2.5M48.5 586l1.5-1.5" stroke="#555" stroke-width="1"/><path d="M43.8 590v8" stroke="#333" stroke-width="1.1"/><g stroke="#999" stroke-width="0.6"><path d="M43.8 589.5v1.5M43.8 603.5v1.5M36 597.3h1.5M50 597.3h1.5"/></g>
<path d="M37.5 631.6l23.9-3.2" stroke="#d82a2a" stroke-width="2"/>
<!-- r7c1 -->
<path d="M69.3 609.3L98.8 602Q112 616 124.3 627.6L95.6 639.5Q82 624 69.3 609.3z" fill="url(#gPaper)"/>
<g stroke-width="2"><path d="M84 609h12" stroke="#3a62c8"/><path d="M84 609h5" stroke="#3aa02a"/><path d="M81 616h11" stroke="#3a62c8"/><path d="M91 620h12" stroke="#3a62c8"/><path d="M91 620h6" stroke="#3aa02a"/><path d="M91 624h11" stroke="#3a62c8"/><path d="M91 624h6" stroke="#3aa02a"/><path d="M90 628.5h18" stroke="#3a62c8"/><path d="M90 628.5h9" stroke="#3aa02a"/></g>
<path d="M78 590L69.3 630.8M78 590L86.9 629.2" stroke="#8a8a8a" stroke-width="1.5"/><path d="M78 579v5" stroke="#222" stroke-width="1.4"/><rect x="76" y="583" width="4" height="9" rx="1" fill="#1a1a1a"/>
<path d="M106 629.7l26.3-4.5" stroke="#3a9a2a" stroke-width="3"/><path d="M104 630.1l2.5-.5" stroke="#c8a878" stroke-width="2"/>
<!-- r7c2 folder calendar -->
<path d="M176.8 585.8L199.3 588.5L197.5 611L175.9 608.4z" fill="#eef0f4" stroke="#aaa" stroke-width="0.5"/><path d="M176.8 585.8L199.3 588.5L199 592.5L176.5 590z" fill="#d83a3a"/><g stroke="#666" stroke-width="0.8" fill="none"><path d="M181 584.5v3M185 585v3M189 585.5v3M193 586v3"/></g><g fill="#8a9ad0"><rect x="179" y="594" width="17" height="1"/><rect x="179" y="598" width="17" height="1"/><rect x="178.5" y="602" width="17" height="1"/><rect x="178" y="606" width="17" height="1"/></g>
<path d="M138.6 604l3-3h6l2 2h27l4 30l-36 4z" fill="#8aba50"/>
<rect x="141" y="606" width="33" height="24" fill="#f2f4fa" stroke="#aab" stroke-width="0.5"/>
<g stroke="#3a62c8" stroke-width="1.5"><path d="M145 610h16M141 618h6M141 624h6M141 630h5"/></g><g stroke="#4aa03a" stroke-width="1.2"><path d="M141 621h5M141 627h5"/></g>
<path d="M148 609L181.7 605L180 630L144 636.4z" fill="#98c850"/><path d="M148 609L181.7 605L181 612L147 617z" fill="#b4dc78"/>
<path d="M169.7 632.4l26.3-4.8" stroke="#d82a2a" stroke-width="2"/>
<!-- r8c0 board gears stopwatch -->
<rect x="10" y="667.5" width="41.8" height="27" rx="1.5" fill="#e8eef8" stroke="#666" stroke-width="1.2"/>
<path d="M21 691h4v-4h4v-4h4v-4h4v-4h4v16z" fill="#4a68c0"/><g stroke="#dfe6f6" stroke-width="0.4"><path d="M22 691v-3M24 691v-3M26 691v-6M28 691v-6M30 691v-9M32 691v-9M34 691v-12M36 691v-12M38 691v-15M40 691v-15"/></g>
<path d="M15 692L43 671" stroke="#d82a2a" stroke-width="0.8"/><path d="M15 689L37 669" stroke="#7a9ae0" stroke-width="0.6"/>
<circle cx="10.8" cy="673.9" r="7" fill="#8e8e8e" stroke="#9a9a9a" stroke-width="3" stroke-dasharray="1.6 1.4"/><circle cx="10.8" cy="673.9" r="2.8" fill="#fff"/>
<circle cx="22.3" cy="663.8" r="4.8" fill="#a4a4a4" stroke="#b0b0b0" stroke-width="2.4" stroke-dasharray="1.3 1.2"/><circle cx="22.3" cy="663.8" r="2.2" fill="#fff"/>
<circle cx="56.6" cy="677.9" r="9" fill="#f4f4f4" stroke="#d83a3a" stroke-width="1.6"/><circle cx="56.6" cy="666.5" r="1.8" fill="none" stroke="#d83a3a" stroke-width="1.2"/><path d="M56.6 671v8" stroke="#333" stroke-width="0.8"/>
<!-- r8c1 paper clock -->
<path d="M69.3 679.5L95.6 672.3Q108 684 121 693L95.6 706.5Q82 692 69.3 679.5z" fill="url(#gPaper)"/>
<g stroke-width="2"><path d="M86 679h10" stroke="#3aa02a"/><path d="M80 684h10" stroke="#3a62c8"/><path d="M90 686h10" stroke="#3aa02a"/><path d="M88 691h10" stroke="#3aa02a"/><path d="M86 695h14" stroke="#3aa02a"/></g>
<path d="M92 699l3 3 4-3" stroke="#d83a3a" stroke-width="0.8" fill="none"/>
<path d="M101.2 697.8l28.7-4.8" stroke="#d82a2a" stroke-width="2.2"/>
<path d="M109 652q9-9 19 0" stroke="#555" stroke-width="1" fill="none"/>
<ellipse cx="110.5" cy="656" rx="5" ry="3.8" fill="#8ccf3a" transform="rotate(-30 110.5 656)"/><ellipse cx="126" cy="657" rx="5" ry="3.8" fill="#8ccf3a" transform="rotate(30 126 657)"/>
<path d="M109 683l-2 3M127 683l2 3" stroke="#6aa82a" stroke-width="1.5"/>
<circle cx="118" cy="670" r="13.3" fill="#7cc034"/><circle cx="118" cy="670.3" r="10.5" fill="#d4d4d4"/><circle cx="118" cy="670.3" r="8.5" fill="#e8e8e8"/><path d="M118 670.3l-3-7.5M118 670.3l-5-5" stroke="#333" stroke-width="1"/><g fill="#555"><circle cx="118" cy="661.5" r="0.6"/><circle cx="118" cy="679" r="0.6"/><circle cx="109.3" cy="670.3" r="0.6"/><circle cx="126.7" cy="670.3" r="0.6"/></g>
<!-- r8c2 bars -->
<path d="M136.3 656.3h36.7v8H140l-3.7 3z" fill="#3a8a3a"/><path d="M173 656.3h26.2v12l-3-4H173z" fill="#4a4a4a"/>
<rect x="139.4" y="672.3" width="46.3" height="9.5" rx="4.7" fill="url(#gBarB)"/>
<rect x="139.4" y="672.3" width="30.3" height="9.5" rx="4.7" fill="url(#gBar)"/>
<rect x="145.8" y="685" width="49.4" height="10.4" rx="5.2" fill="url(#gBarB)"/>
<rect x="145.8" y="685" width="34.2" height="10.4" rx="5.2" fill="url(#gBar)"/>
</svg>

</div>

<div id="canvas" class="a"></div>
<div class="a" style="left:504.5px;top:390px;width:185px;height:51.5px;border:1.5px solid #5c9c72;border-radius:7px;background:#d0e2d8"></div>
<div class="a" style="left:508px;top:393.5px;width:176.5px;height:43.5px;border-radius:22px;background:#95b53a"></div>
<div class="a" style="left:508px;top:407.5px;width:176.5px;text-align:center;font-size:16px;letter-spacing:-0.25px;color:#fff;line-height:18px">Type your Main Idea</div>
<div id="right" class="a"></div>
<div class="a" style="left:997px;top:67px;width:147px;height:24px;background:#58a0f2"></div>
<div class="a" style="left:1144px;top:67px;width:136px;height:24px;background:#f6f6f6"></div>
<div class="a" style="left:997px;top:91px;width:283px;height:1px;background:#e2ddd2"></div>
<div class="a" style="left:997px;top:73px;width:147px;text-align:center;font-size:13.5px;color:#fff">Icons</div>
<div class="a" style="left:1187.5px;top:72.5px;font-size:14px;color:#1a1a1a">Hypernote</div>
<div class="a" style="left:999.5px;top:101px;width:277px;height:17px;background:#fff;border-radius:4px;box-shadow:0 0 0 0.5px #c4c4c4,0 0.5px 1px rgba(0,0,0,.2)"></div>
<div class="a" style="left:1262px;top:101px;width:14.5px;height:17px;background:linear-gradient(#5e9bf6,#2166e8);border-radius:0 4px 4px 0"></div>
<svg class="a" style="left:1263px;top:102px" width="12" height="15" viewBox="0 0 12 15"><path d="M3 6l3-3 3 3M3 9l3 3 3-3" stroke="#fff" stroke-width="1.3" fill="none"/></svg>
<div class="a" style="left:1007px;top:103px;font-size:11.8px;color:#1a1a1a">Business</div>
<div class="a" style="left:999px;top:130px;width:278px;height:625px;background:#fff;border:1px solid #c6c6c6;border-bottom:1px solid #e0e0e0"></div>
<div class="a hd" style="left:1002px;top:137.5px">Basic Set</div>
<div class="a hd" style="left:1002px;top:330.6px">Emoji Set</div>
<div class="a hd" style="left:1002px;top:386.3px">Priorities Set</div>
<div class="a hd" style="left:1002px;top:441.1px">Caution Set</div>
<div class="a hd" style="left:1002px;top:496.3px">Marker Set</div>
<div class="a hd" style="left:1002px;top:551.5px">Complete Set</div>
<div class="a hd" style="left:1002px;top:606.7px">Number Set</div>
<svg class="a" style="left:0;top:0" width="1280" height="776"><g transform="translate(1003.7,162.0)"><path d="M10 1.5a5.2 5.2 0 0 0-3.2 9.3c.8.7 1 1.6 1 2.6h4.4c0-1 .2-1.9 1-2.6A5.2 5.2 0 0 0 10 1.5z" fill="#f4c73e"/><path d="M8.3 9.5l1.7 2 1.7-2M10 11.5v2" stroke="#2b3f7b" stroke-width="0.9" fill="none"/><rect x="7.8" y="14" width="4.4" height="2.4" rx="0.6" fill="#2b3f7b"/><path d="M8.5 16.4h3l-1.5 1.8z" fill="#2b3f7b"/></g>
<g transform="translate(1031.2,162.0)"><circle cx="10" cy="10" r="9.5" fill="none" stroke="#2b3f7b" stroke-width="0.9"/><circle cx="10" cy="10" r="7.8" fill="#2b3f7b"/><path d="M10.3 4.5v6h4.2" stroke="#fff" stroke-width="1.4" fill="none"/></g>
<g transform="translate(1058.7,162.0)"><circle cx="12.5" cy="6.8" r="5.6" fill="none" stroke="#2b3f7b" stroke-width="0.7"/><circle cx="12.5" cy="6.8" r="4.5" fill="#2b3f7b"/><path d="M12.6 3.6v3.6h2.6" stroke="#fff" stroke-width="0.9" fill="none"/><path d="M1 18.5l1-2.5q3-2 6-1.5t7-1.7l2.5-.3q-1.5 2-5 3.2t-5 .8z" fill="#2b3f7b"/></g>
<g transform="translate(1086.2,162.0)"><circle cx="10" cy="10" r="9.6" fill="#2b3f7b"/><path d="M5 10.5l3.2 3.2 7-7.2" stroke="#fff" stroke-width="2.6" fill="none"/></g>
<g transform="translate(1113.7,162.0)"><circle cx="10" cy="10" r="9.6" fill="#d6461f"/><path d="M6 6l8 8M14 6l-8 8" stroke="#fff" stroke-width="3"/></g>
<g transform="translate(1141.2,162.0)"><circle cx="10" cy="10" r="9.6" fill="#1f3a72"/><path d="M8.6 3h2.8l-.5 10.5H9.1z" fill="#d6461f"/><circle cx="10" cy="16" r="1.6" fill="#d6461f"/></g>
<g transform="translate(1168.7,162.0)"><circle cx="10" cy="10" r="9.6" fill="#2b3f7b"/><path d="M6.5 7.5q0-4 3.7-4t3.7 3.5q0 2-2.2 3.3-1.3.8-1.3 2.6H8.4q0-2.6 1.8-3.8 1.5-1 1.5-2.1 0-1.3-1.5-1.3-1.4 0-1.6 1.8z" fill="#d6461f"/><circle cx="9.6" cy="15.5" r="1.6" fill="#d6461f"/></g>
<g transform="translate(1196.2,162.0)"><path d="M6 0.5h8l5.5 5.5v8L14 19.5H6L.5 14V6z" fill="#d6461f"/><path d="M6.5 11V6.5q0-.9.8-.9t.8.9V5q0-.9.8-.9t.8.9V4.6q0-.9.8-.9t.8.9V6q0-.9.8-.9t.8.9v6.5l1.5-1.7q.7-.5 1.2 0l-3 4.6q-.8 1.3-2.5 1.3H9q-2.5 0-2.5-2.7z" fill="#fff"/></g>
<g transform="translate(1223.7,162.0)"><circle cx="9" cy="13.5" r="5.6" fill="#2b3f7b"/><path d="M11 8.5l1-3 1.5-1.5" stroke="#2b3f7b" stroke-width="1" fill="none"/><circle cx="14" cy="3" r="1.2" fill="#f4c73e"/></g>
<g transform="translate(1251.2,162.0)"><circle cx="6.5" cy="6.5" r="5" fill="#2b3f7b"/><circle cx="5.5" cy="5" r="1.4" fill="#fff"/><path d="M9.5 9.5l8.5 9" stroke="#2b3f7b" stroke-width="2.6"/><path d="M11 11l6.5 6.8" stroke="#fff" stroke-width="0.6"/></g>
<g transform="translate(1003.7,189.7)"><circle cx="10" cy="10" r="9.6" fill="#2b3f7b"/><circle cx="10" cy="4.6" r="1.6" fill="#fff"/><path d="M7.6 7.5h3.8v7.5h1.3v2H7.3v-2h1.4V9.5H7.6z" fill="#fff"/></g>
<g transform="translate(1031.2,189.7)"><path d="M6 0.5h8l5.5 5.5v8L14 19.5H6L.5 14V6z" fill="#d6461f"/><text x="10" y="12.2" font-size="5.6" font-weight="bold" fill="#fff" text-anchor="middle" font-family="Liberation Sans">STOP</text></g>
<g transform="translate(1058.7,189.7)"><circle cx="10" cy="10" r="8.6" fill="none" stroke="#d6461f" stroke-width="1.8"/><path d="M4 16L16 4" stroke="#d6461f" stroke-width="1.8"/></g>
<g transform="translate(1086.2,189.7)"><circle cx="10" cy="10" r="9.6" fill="#2b3f7b"/><path d="M14 5.2q-1-.9-2.8-.9-3.5 0-4.3 4.3H5.4M14 14.8q-1 .9-2.8.9-3.5 0-4.3-4.3H5.4M5.4 10h6" stroke="#f4c73e" stroke-width="1.5" fill="none"/></g>
<g transform="translate(1113.7,189.7)"><circle cx="10" cy="10" r="9.6" fill="#2b3f7b"/><path d="M13.3 6.5q-.5-2-3.3-2-3 0-3 2.5 0 2 3 2.8t3 2.8q0 2.6-3 2.6-3 0-3.5-2.3M10 2.5v15" stroke="#f4c73e" stroke-width="1.8" fill="none"/></g>
<g transform="translate(1141.2,189.7)"><path d="M4.5 6.5a7 7 0 1 1-0.5 7.5" stroke="#2b3f7b" stroke-width="2.8" fill="none"/><path d="M1 3.5l7 1.5-5.5 5z" fill="#2b3f7b"/></g>
<g transform="translate(1168.7,189.7)"><path d="M6.5 9V6.5a3.5 3.5 0 0 1 7 0V9" stroke="#2b3f7b" stroke-width="1.8" fill="none"/><rect x="4.5" y="9" width="11" height="9.5" rx="0.8" fill="#2b3f7b"/><circle cx="10" cy="12.8" r="1.3" fill="#fff"/><path d="M9.4 13h1.2l.3 2.8H9.1z" fill="#fff"/></g>
<g transform="translate(1196.2,189.7)"><path d="M6.5 9V6.5a3.5 3.5 0 0 1 7 0V9" stroke="#f4c73e" stroke-width="1.8" fill="none"/><rect x="4.5" y="9" width="11" height="9.5" rx="0.8" fill="#f4c73e"/><circle cx="10" cy="12.8" r="1.3" fill="#fff"/><path d="M9.4 13h1.2l.3 2.8H9.1z" fill="#fff"/></g>
<g transform="translate(1223.7,189.7)"><rect x="1.5" y="1.5" width="17" height="17" rx="2.2" fill="#2b3f7b"/><rect x="5" y="2.5" width="10" height="5.5" rx="0.8" fill="#fff"/><rect x="11.5" y="3.5" width="2" height="3.5" fill="#2b3f7b"/><path d="M4.5 12.5h11M4.5 15.2h11" stroke="#fff" stroke-width="1"/></g>
<g transform="translate(1251.2,189.7)"><path d="M1 5.5h6l1.5 1.5h8v3H5L1.5 17z" fill="#2b3f7b"/><path d="M5.5 9.5h14l-3.5 8H1.5z" fill="#2b3f7b"/><path d="M5.8 10.5L2.5 17" stroke="#fff" stroke-width="0.7"/></g>
<g transform="translate(1003.7,217.4)"><path d="M3.5 1h9l4 4v14h-13z" fill="#2b3f7b"/><path d="M12.5 1v4h4" fill="#fff" fill-opacity="0.5"/><path d="M6 9.5h8M6 12h8M6 14.5h8" stroke="#fff" stroke-width="1"/></g>
<g transform="translate(1031.2,217.4)"><rect x="5" y="2" width="14.5" height="16" rx="2" fill="#2b3f7b"/><path d="M6 1.3h12" stroke="#2b3f7b" stroke-width="0.8"/><path d="M1.5 5h5M1.5 8.5h5M1.5 12h5M1.5 15.5h5" stroke="#2b3f7b" stroke-width="1.3"/><path d="M2.5 5h2.5M2.5 8.5h2.5M2.5 12h2.5M2.5 15.5h2.5" stroke="#fff" stroke-width="0.5"/></g>
<g transform="translate(1058.7,217.4)"><path d="M1 4h7.5l1.5 1.5L11.5 4H19v2h-7l-2 1.5L8 6H1zM1.5 8h6l2.5 1.5L12.5 8h6v2h-6l-2.5 1L7.5 10h-6z" fill="#2b3f7b"/><path d="M4.5 11.5l5.5 1.5 5.5-1.5V17l-5.5 1.8L4.5 17z" fill="#2b3f7b"/><path d="M10 13v5.5" stroke="#fff" stroke-width="0.6"/></g>
<g transform="translate(1086.2,217.4)"><circle cx="7.5" cy="7.5" r="5.8" fill="none" stroke="#2b3f7b" stroke-width="1.2"/><path d="M11.5 11.5l7 7" stroke="#2b3f7b" stroke-width="2"/></g>
<g transform="translate(1113.7,217.4)"><path d="M9 3.5q4 0 4 4.5 0 3-2 5l-.5 1.5 4 1.5q1.5.8 1.5 3.5H2q0-2.7 1.5-3.5l4-1.5-.5-1.5q-2-2-2-5 0-4.5 4-4.5z" fill="#2b3f7b"/><circle cx="15" cy="3" r="1.6" fill="#2b3f7b"/><path d="M15 4.5v2" stroke="#2b3f7b" stroke-width="1"/></g>
<g transform="translate(1141.2,217.4)"><path d="M9 9.2h2M1 8.5h18" stroke="#2b3f7b" stroke-width="1.2" fill="none"/><path d="M1.5 8.5h7.5v2q0 3-3.5 3h-0.5q-3.5 0-3.5-3zM11 8.5h7.5v2q0 3-3.5 3h-0.5q-3.5 0-3.5-3z" stroke="#2b3f7b" stroke-width="1.3" fill="none"/></g>
<g transform="translate(1168.7,217.4)"><path d="M1 10q9-9.5 18 0-9 9.5-18 0z" fill="none" stroke="#2b3f7b" stroke-width="1.2"/><circle cx="10" cy="10" r="3.8" fill="none" stroke="#2b3f7b" stroke-width="1.2"/><circle cx="10" cy="10" r="1.8" fill="#2b3f7b"/></g>
<g transform="translate(1196.2,217.4)"><circle cx="5" cy="3" r="2.2" fill="#2b3f7b"/><circle cx="15" cy="3" r="2.2" fill="#2b3f7b"/><path d="M1.5 6h7v7H7v6H3v-6H1.5zM11.5 6h7v7H17v6h-4v-6h-1.5z" fill="#2b3f7b"/><circle cx="10" cy="5" r="1.8" fill="#f4c73e"/><path d="M8 7.5h4v6h-.8v5.5H8.8v-5.5H8z" fill="#f4c73e"/></g>
<g transform="translate(1223.7,217.4)"><path d="M4 1h12v1.5q0 5-4.5 7.5 4.5 2.5 4.5 7.5v1.5H4V17q0-5 4.5-7.5Q4 7 4 2z" fill="#2b3f7b"/><path d="M6.5 17q0-3 3.5-4.5 3.5 1.5 3.5 4.5z" fill="#f4c73e"/><path d="M7.5 4h5q-.8 2.5-2.5 3.5Q8.3 6.5 7.5 4z" fill="#f4c73e"/></g>
<g transform="translate(1251.2,217.4)"><path d="M10 1.5q5 0 5.5 6.5t3 9.5H1.5q2.5-3 3-9.5T10 1.5z" fill="#2b3f7b"/><circle cx="10" cy="18" r="2" fill="#2b3f7b"/></g>
<g transform="translate(1003.7,245.1)"><rect x="0.5" y="8" width="7.5" height="4" rx="1.5" fill="#2b3f7b"/><path d="M8 8l5-5v14l-5-5z" fill="#2b3f7b"/><path d="M14.5 7q1.8 3 0 6M16.5 5q3 5 0 10" stroke="#2b3f7b" stroke-width="1" fill="none"/></g>
<g transform="translate(1031.2,245.1)"><path d="M3 3q-2 3-1 7M17 3q2 3 1 7" stroke="#2b3f7b" stroke-width="0.8" fill="none"/><circle cx="10" cy="9.5" r="7" fill="#2b3f7b"/><circle cx="10" cy="9.5" r="1.3" fill="#fff"/><path d="M4 17h12" stroke="#2b3f7b" stroke-width="1.5"/></g>
<g transform="translate(1058.7,245.1)"><path d="M8 1.5l-1.5 3M11 1.5l-1.5 3M14 1.5l-1.5 3" stroke="#2b3f7b" stroke-width="0.9"/><path d="M4 7h11v3q0 5.5-5.5 5.5T4 10z" fill="#2b3f7b"/><path d="M15 8.5q3 0 3 2.5t-3.5 2.5" stroke="#2b3f7b" stroke-width="1.3" fill="none"/><path d="M1.5 17.5q8 2.5 17 0" stroke="#2b3f7b" stroke-width="1.2" fill="none"/></g>
<g transform="translate(1086.2,245.1)"><path d="M1 10l9-8 9 8" stroke="#2b3f7b" stroke-width="1.4" fill="none"/><path d="M4 10l6-5.3 6 5.3v8h-4v-5H8v5H4z" fill="#2b3f7b"/></g>
<g transform="translate(1113.7,245.1)"><rect x="1" y="4" width="18" height="12.5" fill="#f4c73e" stroke="#2b3f7b" stroke-width="1.3"/><path d="M1 4.5l9 6.5 9-6.5" stroke="#2b3f7b" stroke-width="1.2" fill="none"/></g>
<g transform="translate(1141.2,245.1)"><circle cx="10" cy="10" r="9.6" fill="#2b3f7b"/><path d="M4 5q3-2 5 0t0 3l-2 1q-1 2 1 4l-2 2q-3-3-3-6zM11 3q3 .5 4.5 3l-1.5 3 1 3-2 3.5q-2 .5-1.5-2.5t-1-3.5q-2-1 0-3t.5-3.5z" fill="#f4c73e"/></g>
<g transform="translate(1168.7,245.1)"><circle cx="10" cy="10" r="9.6" fill="#2b3f7b"/><circle cx="10" cy="10" r="3" fill="none" stroke="#f4c73e" stroke-width="1.8"/><path d="M13 7v4q0 2 2 1.5t1.5-3.5q-.5-6-6.5-6-6.5 0-6.5 7t6.5 6.5q2 0 3.5-.8" stroke="#f4c73e" stroke-width="1.6" fill="none"/></g>
<g transform="translate(1196.2,245.1)"><path d="M5 1.5h9q3 0 3 3V15h-4v4h-2v-4H3V4.5q0-3 2-3z" fill="#2b3f7b"/><rect x="6.5" y="4" width="4" height="1.8" fill="#fff"/><path d="M13.5 4v10" stroke="#fff" stroke-width="0.6"/></g>
<g transform="translate(1223.7,245.1)"><circle cx="10" cy="10" r="9.6" fill="#2b3f7b"/><path d="M2 8l4-2.5 4 1.5 4-1.5 4 2.5-2 4-4 3-3-1-3-2.5z" fill="#f4c73e"/><path d="M7 9l3 2.5M9 8.5l3 2.5M10 7l4 3.5" stroke="#2b3f7b" stroke-width="0.6"/></g>
<g transform="translate(1251.2,245.1)"><path d="M5 2h8l3 3v3h2.5q1 0 1 1v9H1V9q0-1 1-1h3z" fill="#2b3f7b"/><rect x="6.5" y="3.5" width="6" height="4" fill="#fff"/><rect x="1.5" y="8.5" width="3.5" height="9" rx="1.5" fill="#fff"/><rect x="2.2" y="9" width="2.1" height="8" rx="1" fill="#2b3f7b"/><g fill="#fff"><rect x="8" y="10.5" width="2" height="1.5"/><rect x="11" y="10.5" width="2" height="1.5"/><rect x="14" y="10.5" width="2" height="1.5"/><rect x="8" y="13" width="2" height="1.5"/><rect x="11" y="13" width="2" height="1.5"/><rect x="14" y="13" width="2" height="1.5"/><rect x="8" y="15.5" width="2" height="1.5"/><rect x="11" y="15.5" width="2" height="1.5"/><rect x="14" y="15.5" width="2" height="1.5"/></g></g>
<g transform="translate(1003.7,272.8)"><rect x="5" y="1" width="10.5" height="18" rx="1" fill="#2b3f7b"/><rect x="6.2" y="2.2" width="8.1" height="8.8" fill="#f4c73e"/><g fill="#f4c73e"><rect x="6.3" y="11.5" width="2" height="1.6"/><rect x="9" y="11.5" width="2" height="1.6"/><rect x="11.7" y="11.5" width="2" height="1.6"/><rect x="6.3" y="14" width="2" height="1.6"/><rect x="9" y="14" width="2" height="1.6"/><rect x="11.7" y="14" width="2" height="1.6"/><rect x="6.3" y="16.3" width="2" height="1.6"/><rect x="9" y="16.3" width="2" height="1.6"/><rect x="11.7" y="16.3" width="2" height="1.6"/></g></g>
<g transform="translate(1031.2,272.8)"><path d="M6 1.5l2.5 4.5-2 2q1 3.5 4.5 6l2-1.5 4 3-1.5 2.5q-5 .5-9-4.5T4 3z" fill="#2b3f7b"/></g>
<g transform="translate(1058.7,272.8)"><rect x="1.5" y="9" width="3.5" height="9.5" fill="#2b3f7b"/><path d="M6 9.5l3.5-4 1.5-4.5q2 0 2 3l-1 3.5h5q2 0 1.8 2l-1.3 7.5q-.4 1.5-2 1.5H6z" fill="#2b3f7b"/></g>
<g transform="translate(1086.2,272.8)"><rect x="1.5" y="1.5" width="3.5" height="9.5" fill="#2b3f7b"/><path d="M6 10.5l3.5 4 1.5 4.5q2 0 2-3l-1-3.5h5q2 0 1.8-2L17.5 3q-.4-1.5-2-1.5H6z" fill="#2b3f7b"/></g>
<g transform="translate(1113.7,272.8)"><circle cx="10" cy="10" r="9.6" fill="#2b3f7b"/><text x="10" y="13.6" font-size="9.5" font-weight="bold" fill="#f4c73e" text-anchor="middle" font-family="Liberation Sans" letter-spacing="-0.5">OK</text></g>
<g transform="translate(1141.2,272.8)"><circle cx="10" cy="8" r="7" fill="none" stroke="#f4c73e" stroke-width="1.3"/><circle cx="10" cy="6.3" r="1.8" fill="#2b3f7b"/><path d="M6.8 11.3q0-2.8 3.2-2.8t3.2 2.8z" fill="#2b3f7b"/><path d="M10 15v4M6 17l-2 1M14 17l2 1" stroke="#f4c73e" stroke-width="1.2"/></g>
<g transform="translate(1168.7,272.8)"><circle cx="6" cy="7.5" r="2.8" fill="#2b3f7b"/><path d="M1 16q0-5 5-5t5 5z" fill="#2b3f7b"/><circle cx="14" cy="6.5" r="3" fill="#2b3f7b"/><path d="M9 15.5q0-5.5 5-5.5t5 5.5z" fill="#2b3f7b"/></g>
<g transform="translate(1196.2,272.8)"><rect x="1" y="3.5" width="18" height="13" rx="1" fill="#2b3f7b"/><rect x="2.5" y="5" width="4" height="1.5" fill="#fff"/><path d="M1 7.5h18" stroke="#fff" stroke-width="0.6"/><g fill="#fff" fill-opacity="0.7"><rect x="3" y="9.5" width="5" height="1"/><rect x="3" y="12" width="5" height="1"/><rect x="11" y="9.5" width="6" height="1"/><rect x="11" y="12" width="6" height="1"/></g></g>
<g transform="translate(1223.7,272.8)"><circle cx="10" cy="10" r="9.6" fill="#2b3f7b"/><path d="M12.5 3l-6 8h3.5l-2.5 6.5 6-8.5h-3.5z" fill="none" stroke="#f4c73e" stroke-width="1.1"/></g>
<g transform="translate(1251.2,272.8)"><path d="M1 6h4.5l1.5-2.5h6L14.5 6H19v11H1z" fill="#2b3f7b"/><rect x="2.5" y="7" width="3" height="1.5" fill="#fff"/><circle cx="10" cy="11" r="3.8" fill="#fff"/><circle cx="10" cy="11" r="2.5" fill="#2b3f7b"/><circle cx="10" cy="11" r="1" fill="#fff"/></g>
<g transform="translate(1003.7,300.5)"><rect x="1" y="3" width="18" height="16" rx="1" fill="#2b3f7b"/><rect x="2.5" y="7" width="15" height="10.5" fill="#fff"/><path d="M5 1v4M10 1v4M15 1v4" stroke="#2b3f7b" stroke-width="1.4"/><g fill="#2b3f7b"><rect x="3.5" y="8" width="2" height="1.8"/><rect x="6.5" y="8" width="2" height="1.8"/><rect x="9.5" y="8" width="2" height="1.8"/><rect x="12.5" y="8" width="2" height="1.8"/><rect x="15" y="8" width="2" height="1.8"/><rect x="3.5" y="11" width="2" height="1.8"/><rect x="6.5" y="11" width="2" height="1.8"/><rect x="9.5" y="11" width="2" height="1.8"/><rect x="12.5" y="11" width="2" height="1.8"/><rect x="15" y="11" width="2" height="1.8"/><rect x="3.5" y="14" width="2" height="1.8"/><rect x="6.5" y="14" width="2" height="1.8"/><rect x="9.5" y="14" width="2" height="1.8"/><rect x="12.5" y="14" width="2" height="1.8"/><rect x="15" y="14" width="2" height="1.8"/></g></g>
<g transform="translate(1031.2,300.5)"><path d="M3 5.5l5.5-4.5 2 2.5L5 8z" fill="#2b3f7b"/><path d="M7 5.5l9.5 8.5" stroke="#2b3f7b" stroke-width="1.6"/><path d="M4 17.5h11v1.5H4zM6 15.5h7v2H6z" fill="#2b3f7b"/></g>
<g transform="translate(1058.7,300.5)"><rect x="6" y="1" width="8" height="18" rx="1.5" fill="#2b3f7b"/><g fill="#fff"><circle cx="10" cy="4.5" r="1.6"/><circle cx="10" cy="9.5" r="1.6"/><circle cx="10" cy="14.5" r="1.6"/></g><path d="M2 3.5l4 2.5v-2zM2 8.5l4 2.5v-2zM2 13.5l4 2.5v-2zM18 3.5l-4 2.5v-2zM18 8.5l-4 2.5v-2zM18 13.5l-4 2.5v-2z" fill="#2b3f7b"/></g>
<g transform="translate(1086.2,300.5)"><path d="M10 18L2.5 10.5Q0 8 1 5.2 2.5 2 5.8 2 8.5 2 10 4.5 11.5 2 14.2 2 17.5 2 19 5.2q1 2.8-1.5 5.3z" fill="#d6461f"/></g>
<g transform="translate(1113.7,300.5)"><ellipse cx="5.5" cy="6.5" rx="2" ry="3.5" fill="#2b3f7b"/><ellipse cx="5.8" cy="11.8" rx="1.5" ry="1.2" fill="#2b3f7b"/><circle cx="4" cy="2" r="0.8" fill="#2b3f7b"/><circle cx="6" cy="1.8" r="0.7" fill="#2b3f7b"/><ellipse cx="13" cy="11" rx="2" ry="3.5" fill="#2b3f7b"/><ellipse cx="13.3" cy="16.3" rx="1.5" ry="1.3" fill="#2b3f7b"/><circle cx="11.5" cy="6.5" r="0.8" fill="#2b3f7b"/><circle cx="13.5" cy="6.3" r="0.7" fill="#2b3f7b"/></g>
<g transform="translate(1141.2,300.5)"><path d="M19 1q-6 0-10.5 5.5L5.5 10l4.5 4.5 3.5-3Q19 7 19 1z" fill="#2b3f7b"/><circle cx="13.5" cy="6.5" r="1.6" fill="#fff"/><path d="M5 9L2 10l3-4h3zM11 15l-1 3 4-3v-3z" fill="#2b3f7b"/><path d="M5 13l-4 6M7 15l-3 3" stroke="#2b3f7b" stroke-width="1.2"/></g>
<g transform="translate(1168.7,300.5)"><path d="M10 1.5v16M3 4h14M5 19h10" stroke="#2b3f7b" stroke-width="1.2"/><path d="M3.5 4L1 11h5zM16.5 4L14 11h5z" fill="none" stroke="#2b3f7b" stroke-width="0.9"/><path d="M1 11q2.5 2.5 5 0M14 11q2.5 2.5 5 0" stroke="#2b3f7b" stroke-width="1.2" fill="none"/></g>
<g transform="translate(1003.7,354.5)"><circle cx="10" cy="10" r="8.9" fill="none" stroke="#2b3f7b" stroke-width="1.6"/><path d="M4.5 11.2q5.5 5.5 11 0" stroke="#2b3f7b" stroke-width="1.5" fill="none"/><ellipse cx="7.6" cy="6.8" rx="1" ry="1.5" fill="#2b3f7b"/><ellipse cx="12.4" cy="6.8" rx="1" ry="1.5" fill="#2b3f7b"/></g>
<g transform="translate(1031.2,354.5)"><circle cx="10" cy="10" r="8.9" fill="none" stroke="#2b3f7b" stroke-width="1.6"/><path d="M5.3 14.8q4-4.5 8.2 0.5" stroke="#2b3f7b" stroke-width="1.5" fill="none"/><ellipse cx="7.6" cy="7" rx="1" ry="1.5" fill="#2b3f7b"/><ellipse cx="12.4" cy="7" rx="1" ry="1.5" fill="#2b3f7b"/></g>
<g transform="translate(1058.7,354.5)"><circle cx="10" cy="10" r="8.9" fill="none" stroke="#2b3f7b" stroke-width="1.6"/><path d="M4.8 15q5.2-5.5 10.4 0" stroke="#2b3f7b" stroke-width="1.5" fill="none"/><ellipse cx="7.6" cy="7" rx="1" ry="1.5" fill="#2b3f7b"/><ellipse cx="12.4" cy="7" rx="1" ry="1.5" fill="#2b3f7b"/></g>
<g transform="translate(1086.2,354.5)"><circle cx="10" cy="10" r="8.9" fill="none" stroke="#2b3f7b" stroke-width="1.6"/><path d="M5.3 15.2q4-4.5 8 0" stroke="#2b3f7b" stroke-width="1.5" fill="none"/><path d="M5 7.5l3.2-1M11.8 6.5l3.2 1" stroke="#2b3f7b" stroke-width="1.4" fill="none"/><path d="M14.2 12q-1.5 2 0 2.8t1.5-1.5z" fill="#2b3f7b"/></g>
<g transform="translate(1113.7,354.5)"><circle cx="10" cy="10" r="8.9" fill="none" stroke="#2b3f7b" stroke-width="1.6"/><path d="M4.8 14.5q5.2-5 10.4 0" stroke="#2b3f7b" stroke-width="1.5" fill="none"/><path d="M5.8 5.5l3 1.7-3 1.7M14.2 5.5l-3 1.7 3 1.7" stroke="#2b3f7b" stroke-width="1.3" fill="none"/></g>
<g transform="translate(1003.7,410.5)"><path d="M10 0.5l5.5 6.5h-2.3v12.5H6.8V7H4.5z" fill="#2b3f7b"/></g>
<g transform="translate(1031.2,410.5)"><path d="M19.5 10L13 15.5v-2.3H.5V6.8H13V4.5z" fill="#6b7d2a"/></g>
<g transform="translate(1058.7,410.5)"><path d="M10 19.5l5.5-6.5h-2.3V.5H6.8V13H4.5z" fill="#5c1e6b"/></g>
<g transform="translate(1086.2,410.5)"><path d="M.5 10L7 15.5v-2.3h12.5V6.8H7V4.5z" fill="#d6461f"/></g>
<g transform="translate(1113.7,410.5)"><path d="M.5 10L6 15v-2.5h8V15l5.5-5L14 5v2.5H6V5z" fill="#f4c73e"/></g>
<g transform="translate(1003.7,465.5)"><path d="M1 1v18" stroke="#2b3f7b" stroke-width="1.5"/><path d="M1.7 2l10.3 4.5L1.7 11z" fill="#2e2e2e"/></g>
<g transform="translate(1031.2,465.5)"><path d="M1 1v18" stroke="#2b3f7b" stroke-width="1.5"/><path d="M1.7 2l10.3 4.5L1.7 11z" fill="#2b3f7b"/></g>
<g transform="translate(1058.7,465.5)"><path d="M1 1v18" stroke="#2b3f7b" stroke-width="1.5"/><path d="M1.7 2l10.3 4.5L1.7 11z" fill="#6b7d2a"/></g>
<g transform="translate(1086.2,465.5)"><path d="M1 1v18" stroke="#2b3f7b" stroke-width="1.5"/><path d="M1.7 2l10.3 4.5L1.7 11z" fill="#ef6a2c"/></g>
<g transform="translate(1113.7,465.5)"><path d="M1 1v18" stroke="#2b3f7b" stroke-width="1.5"/><path d="M1.7 2l10.3 4.5L1.7 11z" fill="#5c1e6b"/></g>
<g transform="translate(1141.2,465.5)"><path d="M1 1v18" stroke="#2b3f7b" stroke-width="1.5"/><path d="M1.7 2l10.3 4.5L1.7 11z" fill="#d6461f"/></g>
<g transform="translate(1168.7,465.5)"><path d="M1 1v18" stroke="#2b3f7b" stroke-width="1.5"/><path d="M1.7 2l10.3 4.5L1.7 11z" fill="#f4c73e"/></g>
<g transform="translate(1003.7,520.5)"><path d="M10 19.5l-5.6-6.6a7.7 7.7 0 1 1 11.2 0z" fill="#2e2e2e"/><circle cx="10" cy="8" r="4.5" fill="#fff"/></g>
<g transform="translate(1031.2,520.5)"><path d="M10 19.5l-5.6-6.6a7.7 7.7 0 1 1 11.2 0z" fill="#2b3f7b"/><circle cx="10" cy="8" r="4.5" fill="#fff"/></g>
<g transform="translate(1058.7,520.5)"><path d="M10 19.5l-5.6-6.6a7.7 7.7 0 1 1 11.2 0z" fill="#6b7d2a"/><circle cx="10" cy="8" r="4.5" fill="#fff"/></g>
<g transform="translate(1086.2,520.5)"><path d="M10 19.5l-5.6-6.6a7.7 7.7 0 1 1 11.2 0z" fill="#5c1e6b"/><circle cx="10" cy="8" r="4.5" fill="#fff"/></g>
<g transform="translate(1113.7,520.5)"><path d="M10 19.5l-5.6-6.6a7.7 7.7 0 1 1 11.2 0z" fill="#ef6a2c"/><circle cx="10" cy="8" r="4.5" fill="#fff"/></g>
<g transform="translate(1141.2,520.5)"><path d="M10 19.5l-5.6-6.6a7.7 7.7 0 1 1 11.2 0z" fill="#d6461f"/><circle cx="10" cy="8" r="4.5" fill="#fff"/></g>
<g transform="translate(1168.7,520.5)"><path d="M10 19.5l-5.6-6.6a7.7 7.7 0 1 1 11.2 0z" fill="#f4c73e"/><circle cx="10" cy="8" r="4.5" fill="#fff"/></g>
<g transform="translate(1003.7,575.5)"><circle cx="10" cy="10" r="8.6" fill="#fff" stroke="#2b3f7b" stroke-width="1.6"/><g stroke="#2b3f7b" stroke-width="0.8" stroke-opacity="0.7"><path d="M10 2.5v1.5M10 16v1.5M2.5 10h1.5M16 10h1.5"/></g></g>
<g transform="translate(1031.2,575.5)"><circle cx="10" cy="10" r="8.6" fill="#fff" stroke="#2b3f7b" stroke-width="1.6"/><path d="M10 10V3.2A6.8 6.8 0 0 1 14.81 5.19z" fill="#f4c73e"/><g stroke="#2b3f7b" stroke-width="0.8" stroke-opacity="0.7"><path d="M10 2.5v1.5M10 16v1.5M2.5 10h1.5M16 10h1.5"/></g></g>
<g transform="translate(1058.7,575.5)"><circle cx="10" cy="10" r="8.6" fill="#fff" stroke="#2b3f7b" stroke-width="1.6"/><path d="M10 10V3.2A6.8 6.8 0 0 1 16.80 10.00z" fill="#f4c73e"/><g stroke="#2b3f7b" stroke-width="0.8" stroke-opacity="0.7"><path d="M10 2.5v1.5M10 16v1.5M2.5 10h1.5M16 10h1.5"/></g></g>
<g transform="translate(1086.2,575.5)"><circle cx="10" cy="10" r="8.6" fill="#fff" stroke="#2b3f7b" stroke-width="1.6"/><path d="M10 10V3.2A6.8 6.8 0 0 1 14.81 14.81z" fill="#f4c73e"/><g stroke="#2b3f7b" stroke-width="0.8" stroke-opacity="0.7"><path d="M10 2.5v1.5M10 16v1.5M2.5 10h1.5M16 10h1.5"/></g></g>
<g transform="translate(1113.7,575.5)"><circle cx="10" cy="10" r="8.6" fill="#fff" stroke="#2b3f7b" stroke-width="1.6"/><path d="M10 10V3.2A6.8 6.8 0 0 1 10.00 16.80z" fill="#f4c73e"/><g stroke="#2b3f7b" stroke-width="0.8" stroke-opacity="0.7"><path d="M10 2.5v1.5M10 16v1.5M2.5 10h1.5M16 10h1.5"/></g></g>
<g transform="translate(1141.2,575.5)"><circle cx="10" cy="10" r="8.6" fill="#fff" stroke="#2b3f7b" stroke-width="1.6"/><path d="M10 10V3.2A6.8 6.8 0 1 1 5.19 14.81z" fill="#f4c73e"/><g stroke="#2b3f7b" stroke-width="0.8" stroke-opacity="0.7"><path d="M10 2.5v1.5M10 16v1.5M2.5 10h1.5M16 10h1.5"/></g></g>
<g transform="translate(1168.7,575.5)"><circle cx="10" cy="10" r="8.6" fill="#fff" stroke="#2b3f7b" stroke-width="1.6"/><path d="M10 10V3.2A6.8 6.8 0 1 1 3.20 10.00z" fill="#f4c73e"/><g stroke="#2b3f7b" stroke-width="0.8" stroke-opacity="0.7"><path d="M10 2.5v1.5M10 16v1.5M2.5 10h1.5M16 10h1.5"/></g></g>
<g transform="translate(1196.2,575.5)"><circle cx="10" cy="10" r="8.6" fill="#fff" stroke="#2b3f7b" stroke-width="1.6"/><path d="M10 10V3.2A6.8 6.8 0 1 1 5.19 5.19z" fill="#f4c73e"/><g stroke="#2b3f7b" stroke-width="0.8" stroke-opacity="0.7"><path d="M10 2.5v1.5M10 16v1.5M2.5 10h1.5M16 10h1.5"/></g></g>
<g transform="translate(1223.7,575.5)"><circle cx="10" cy="10" r="8.6" fill="#fff" stroke="#2b3f7b" stroke-width="1.6"/><circle cx="10" cy="10" r="6.8" fill="#f4c73e"/><g stroke="#2b3f7b" stroke-width="0.8" stroke-opacity="0.7"><path d="M10 2.5v1.5M10 16v1.5M2.5 10h1.5M16 10h1.5"/></g></g>
<g transform="translate(1003.7,630.5)"><circle cx="10" cy="10" r="9.6" fill="#2b3f7b"/><text x="10" y="15.6" font-size="16" font-weight="bold" fill="#f4c73e" stroke="#f4c73e" stroke-width="0.7" text-anchor="middle" font-family="Liberation Serif">1</text></g>
<g transform="translate(1031.2,630.5)"><circle cx="10" cy="10" r="9.6" fill="#2b3f7b"/><text x="10" y="15.6" font-size="16" font-weight="bold" fill="#f4c73e" stroke="#f4c73e" stroke-width="0.7" text-anchor="middle" font-family="Liberation Serif">2</text></g>
<g transform="translate(1058.7,630.5)"><circle cx="10" cy="10" r="9.6" fill="#2b3f7b"/><text x="10" y="15.6" font-size="16" font-weight="bold" fill="#f4c73e" stroke="#f4c73e" stroke-width="0.7" text-anchor="middle" font-family="Liberation Serif">3</text></g>
<g transform="translate(1086.2,630.5)"><circle cx="10" cy="10" r="9.6" fill="#2b3f7b"/><text x="10" y="15.6" font-size="16" font-weight="bold" fill="#f4c73e" stroke="#f4c73e" stroke-width="0.7" text-anchor="middle" font-family="Liberation Serif">4</text></g>
<g transform="translate(1113.7,630.5)"><circle cx="10" cy="10" r="9.6" fill="#2b3f7b"/><text x="10" y="15.6" font-size="16" font-weight="bold" fill="#f4c73e" stroke="#f4c73e" stroke-width="0.7" text-anchor="middle" font-family="Liberation Serif">5</text></g>
<g transform="translate(1141.2,630.5)"><circle cx="10" cy="10" r="9.6" fill="#2b3f7b"/><text x="10" y="15.6" font-size="16" font-weight="bold" fill="#f4c73e" stroke="#f4c73e" stroke-width="0.7" text-anchor="middle" font-family="Liberation Serif">6</text></g>
<g transform="translate(1168.7,630.5)"><circle cx="10" cy="10" r="9.6" fill="#2b3f7b"/><text x="10" y="15.6" font-size="16" font-weight="bold" fill="#f4c73e" stroke="#f4c73e" stroke-width="0.7" text-anchor="middle" font-family="Liberation Serif">7</text></g>
<g transform="translate(1196.2,630.5)"><circle cx="10" cy="10" r="9.6" fill="#2b3f7b"/><text x="10" y="15.6" font-size="16" font-weight="bold" fill="#f4c73e" stroke="#f4c73e" stroke-width="0.7" text-anchor="middle" font-family="Liberation Serif">8</text></g>
<g transform="translate(1223.7,630.5)"><circle cx="10" cy="10" r="9.6" fill="#2b3f7b"/><text x="10" y="15.6" font-size="16" font-weight="bold" fill="#f4c73e" stroke="#f4c73e" stroke-width="0.7" text-anchor="middle" font-family="Liberation Serif">9</text></g>
<g transform="translate(1251.2,630.5)"><circle cx="10" cy="10" r="9.6" fill="#2b3f7b"/><text x="10" y="15.6" font-size="16" font-weight="bold" fill="#f4c73e" stroke="#f4c73e" stroke-width="0.7" text-anchor="middle" font-family="Liberation Serif">0</text></g></svg>

<div id="status" class="a"></div>
<svg class="a" style="left:7px;top:764px" width="9" height="12" viewBox="0 0 9 12"><path d="M7 1L2 7l5 6" stroke="#8a8a8a" stroke-width="1.2" fill="none"/></svg>
<div class="a" style="left:34px;top:764px;font-size:10.5px;color:#666;line-height:12px">Page-1 (1/1)</div>
<svg class="a" style="left:107px;top:764px" width="10" height="12" viewBox="0 0 10 12"><path d="M2 4.5l3-3 3 3M2 8l3 3 3-3" stroke="#777" stroke-width="1.1" fill="none"/></svg>
<svg class="a" style="left:127px;top:764px" width="9" height="12" viewBox="0 0 9 12"><path d="M2 1l5 6-5 6" stroke="#8a8a8a" stroke-width="1.2" fill="none"/></svg>
<div class="a" style="left:1089.5px;top:764px;font-size:10.5px;color:#666;line-height:12px">100%</div>
<svg class="a" style="left:1118px;top:764px" width="10" height="12" viewBox="0 0 10 12"><path d="M2 4.5l3-3 3 3M2 8l3 3 3-3" stroke="#777" stroke-width="1.1" fill="none"/></svg>
<div class="a" style="left:1135.5px;top:769.5px;width:97px;height:3px;border-radius:1.5px;background:#b4b4b4"></div>
<div class="a" style="left:1135.5px;top:769.5px;width:48px;height:3px;border-radius:1.5px;background:#2d7cf6"></div>
<div class="a" style="left:1178px;top:765px;width:12px;height:12px;border-radius:50%;background:#fff;box-shadow:0 0 0 0.5px #b0b0b0,0 1px 1.5px rgba(0,0,0,.3)"></div>
<svg class="a" style="left:1243px;top:764px" width="15" height="12" viewBox="0 0 15 12"><rect x="1" y="1" width="13" height="11" fill="none" stroke="#777" stroke-width="1.2"/><path d="M1 3.5h13M1 9.5h13" stroke="#777" stroke-width="1"/><path d="M3 1.5v1.5M5 1.5v1.5M7 1.5v1.5M9 1.5v1.5M11 1.5v1.5" stroke="#777" stroke-width="0.6"/></svg>
<div class="a" style="left:0;top:0;width:1px;height:776px;background:linear-gradient(#444,#8a8a8a 10%,#888 90%,#777)"></div>
<div class="a" style="left:1px;top:0;width:1px;height:776px;background:rgba(255,255,255,.6)"></div>
<div class="a" style="left:203px;top:67px;width:1px;height:693px;background:#c6c6c6"></div>
</body></html>
